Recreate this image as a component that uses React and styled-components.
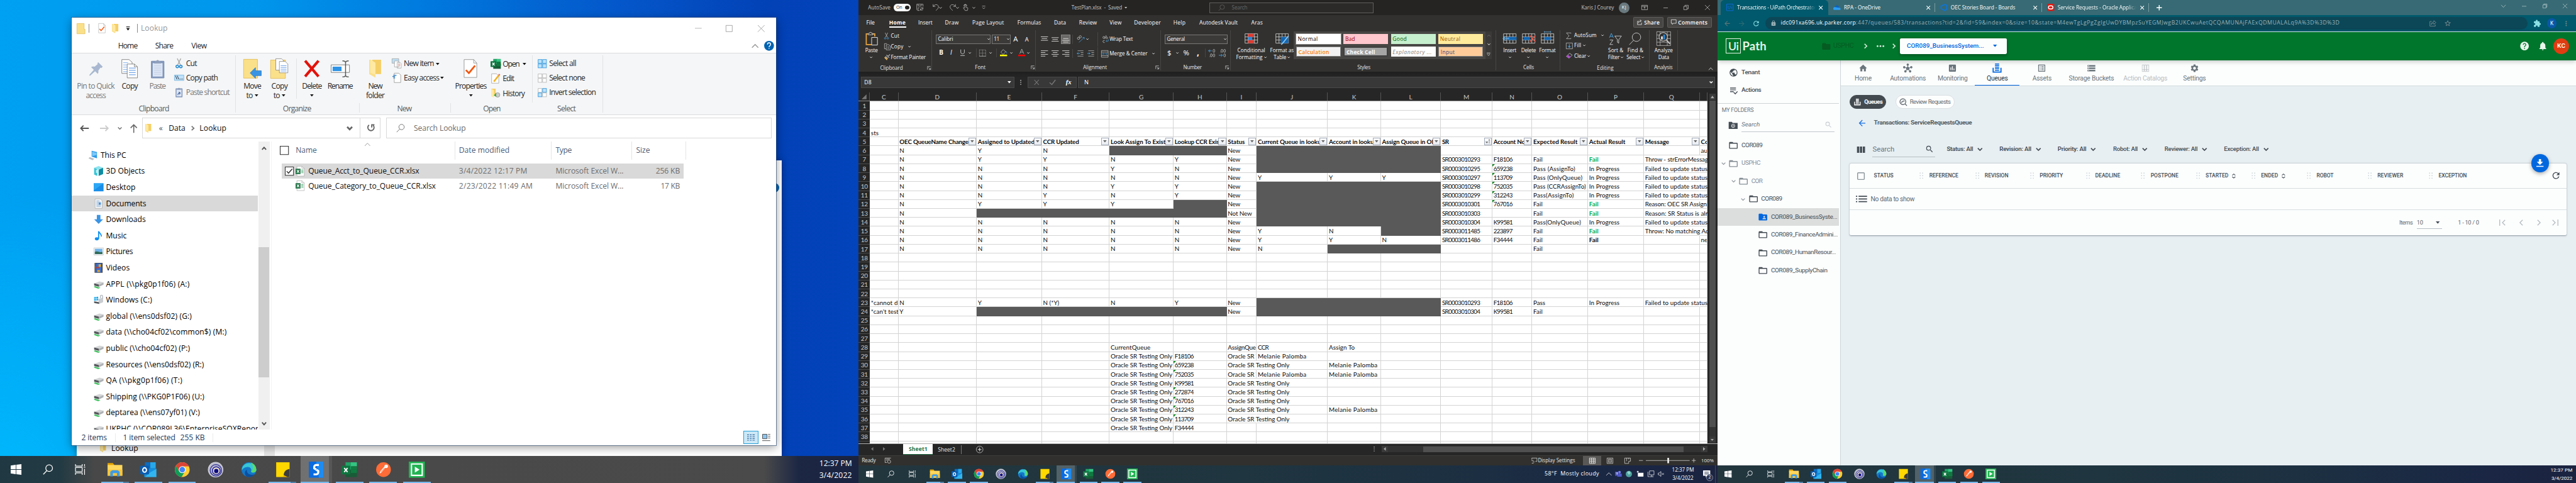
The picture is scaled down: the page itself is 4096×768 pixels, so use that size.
import React, { useLayoutEffect, useRef } from "react";
import styled, { createGlobalStyle, css } from "styled-components";
import {
  MdHome, MdInsertChart, MdSettings, MdPublic, MdFolderOpen, MdFolderShared, MdFolder, MdHelp,
  MdNotifications, MdSearch, MdRefresh, MdStorage, MdListAlt, MdArrowBack, MdArrowForward,
  MdStarBorder, MdExtension, MdLock, MdMoreVert, MdHub,
} from "react-icons/md";

/* 1rem equals ten design pixels on a 5760px wide desktop. */
const r = (n) => `${n / 10}rem`;
const UI = `"Open Sans", "Noto Sans", sans-serif`;
const SHEET = `Lato, "Open Sans", sans-serif`;
const WEB = `Roboto, sans-serif`;

const Global = createGlobalStyle`
  html { font-size: calc(100vw / 576); }
  *, *::before, *::after { box-sizing: border-box; }
  body { margin: 0; overflow: hidden; background: #000; font-family: ${UI}; }
`;

/* ---------- shared pieces ---------- */
const LabelBox = styled.span`
  display: block;
  flex: none;
  white-space: pre;
  line-height: 1.3;
  ${(p) => p.$w && css`width: ${r(p.$w)};`}
  font-size: ${(p) => r(p.$s || 17)};
  color: ${(p) => p.$c || "inherit"};
  font-weight: ${(p) => p.$b || 400};
  font-style: ${(p) => (p.$i ? "italic" : "normal")};
`;

/* Text tracked out or in so that it takes exactly its column width. */
function T({ w, s, c, b, i, children, className }) {
  const ref = useRef(null);
  useLayoutEffect(() => {
    const el = ref.current;
    if (!el || !w) return;
    el.style.letterSpacing = "0px";
    const rem = parseFloat(getComputedStyle(document.documentElement).fontSize);
    const natural = el.getBoundingClientRect().width;
    const n = el.textContent.length;
    el.style.letterSpacing = `${(((w / 10) * rem - natural) / n).toFixed(3)}px`;
  }, [w, s, children]);
  return (
    <LabelBox className={className} $w={w} $s={s} $c={c} $b={b} $i={i}>
      <span ref={ref}>{children}</span>
    </LabelBox>
  );
}

/* A strip whose children start at the given column offsets. */
const Line = styled.div`
  display: grid;
  flex: none;
  align-items: center;
  justify-items: start;
  height: ${(p) => r(p.$h)};
  padding-left: ${(p) => r(p.$x[0])};
  grid-template-columns: ${(p) =>
    p.$x.map((v, i) => (i < p.$x.length - 1 ? r(p.$x[i + 1] - v) : "max-content")).join(" ")};
  grid-template-rows: 100%;
`;

const Ico = styled.svg.attrs((p) => ({
  viewBox: p.viewBox || `0 0 ${p.$w} ${p.$h || p.$w}`,
  fill: p.fill || "none",
  stroke: p.stroke || "currentColor",
}))`
  display: block;
  flex: none;
  overflow: visible;
  width: ${(p) => r(p.$w)};
  height: ${(p) => r(p.$h || p.$w)};
  color: ${(p) => p.$c || "inherit"};
`;

const Rule = styled.i`
  display: block;
  flex: none;
  width: ${(p) => r(p.$w || 1.4)};
  height: ${(p) => r(p.$h)};
  margin: ${(p) => p.$m || 0};
  background: ${(p) => p.$c};
`;

const MdBox = styled.span`
  display: block;
  flex: none;
  width: ${(p) => r(p.$s)};
  height: ${(p) => r(p.$s)};
  color: ${(p) => p.$c || "inherit"};
  svg { display: block; width: 100%; height: 100%; }
`;
const Md = ({ icon: Icon, s = 20, c }) => <MdBox $s={s} $c={c}><Icon /></MdBox>;

const Caret = ({ s = 7, c, k = 1.4 }) => (
  <Ico $w={s} $h={s * 0.6} viewBox="0 0 10 6" $c={c} strokeWidth={k * 1.4}><path d="M1 .8 5 4.8 9 .8" /></Ico>
);
const Tri = ({ s = 9, c = "#111" }) => (
  <Ico $w={s} $h={s * 0.6} viewBox="0 0 10 6" stroke="none" $c={c}><path fill="currentColor" d="M0 0h10L5 6z" /></Ico>
);

const Stage = styled.main`
  display: flex;
  width: 576rem;
  height: 108rem;
  overflow: hidden;
`;
const Screen = styled.section`
  position: relative;
  flex: none;
  display: flex;
  flex-direction: column;
  width: 192rem;
  height: 108rem;
  overflow: hidden;
`;

/* ---------- taskbar ---------- */
const AppGlyph = {
  explorer: (<g stroke="none"><path fill="#e2a203" d="M1 2h8l2 3v4H1z" /><path fill="#ffd75e" d="M1 5h22v16H1z" /><path fill="#f9c53a" d="M1 12h22v9H1z" /><path fill="#3f9be6" d="M5 22v-7l3-2h8l3 2v7h-4v-5H9v5z" /></g>),
  outlook: (<g stroke="none"><path fill="#0f6cbd" d="M7 1h16v9H7z" /><path fill="#28a8ea" d="M15 1h8v9h-8z" /><path fill="#1490df" d="M6 10h18v13H6z" /><path fill="#50d9ff" d="m15 16 9-5v12H7z" opacity=".5" /><rect fill="#0a5cb0" x="0" y="6" width="13" height="13" rx="1" /><ellipse cx="6.500" cy="12.500" rx="2.800" ry="3.300" stroke="#fff" strokeWidth="1.800" fill="none" /></g>),
  chrome: (<g stroke="none"><circle cx="12" cy="12" r="11" fill="#fc3" /><path fill="#db4437" d="M2.500 6.500A11 11 0 0 1 22 7H12L7 14z" /><path fill="#0f9d58" d="M2.500 6.500A11 11 0 0 0 11 23l5-8.500-8.700-.3z" /><circle cx="12" cy="12" r="5.200" fill="#fff" /><circle cx="12" cy="12" r="4.200" fill="#4285f4" /></g>),
  rings: (<g><circle cx="12" cy="12" r="11" fill="#bdbdd0" stroke="#d5d5dc" /><circle cx="12.500" cy="13" r="8.500" stroke="#3b3b96" strokeWidth="1.400" /><circle cx="13" cy="13.500" r="5.800" stroke="#22229a" strokeWidth="1.400" fill="#e5dccb" /><circle cx="13" cy="14" r="3.200" stroke="none" fill="#0c0c84" /></g>),
  edge: (<g stroke="none"><circle cx="12" cy="12" r="11" fill="#1478c8" /><path fill="#37c6d6" d="M1.500 10A11 11 0 0 1 23 12c0 5-6 5.500-8 3 2-4-1-7-5-7-4 0-7 2-8.500 5z" /><path fill="#5bd96a" d="M14 1.200A11 11 0 0 1 23 12c0 4-5 5-7.500 3.300C20 10 18 4 14 1.200z" /><path fill="#0b4f9e" d="M9 12c-1 6 5 9 11.500 7A11 11 0 0 1 9 22.500C5 20 5 14 9 12z" /></g>),
  notes: (<g stroke="none"><path fill="#ffd800" d="M2 1h20v22H2z" /><path fill="#3c3c3c" d="M22 11v12h-9c0-7 2-11 9-12z" /><path fill="#f0b400" d="M13 20v3h6z" /></g>),
  snag: (<g stroke="none"><path fill="#0a6be0" d="M1 0h22v24H1z" /><path fill="#1d8cf2" d="M12 0h11v24h-7z" /><path d="M16 5h-4a3 3 0 0 0-3 3v2l6 4v2a3 3 0 0 1-3 3H8" stroke="#fff" strokeWidth="3" fill="none" /><path d="M12 11.500v1" stroke="#0a6be0" strokeWidth="1" /></g>),
  excel: (<g stroke="none"><path fill="#21a366" d="M6 1h9v11H6z" /><path fill="#33c481" d="M14 1h9v6h-9z" /><path fill="#107c41" d="M14 7h9v6h-9z" /><path fill="#185c37" d="M6 12h17v11H6z" /><path fill="#107c41" d="M14 12h9v5h-9z" /><rect fill="#0f7540" x="0" y="6" width="13" height="13" rx="1" /><path d="m4 9.500 5 6M9 9.500l-5 6" stroke="#fff" strokeWidth="1.800" /></g>),
  postman: (<g stroke="none"><circle cx="12" cy="12" r="11" fill="#ff6c37" /><path d="m6 18 2.500-1.500L15 9l-1.800-1.600L7.500 14z" fill="#fff" /><circle cx="16" cy="7" r="2.600" fill="#fff" /><path d="m8 15.500 5.500-6" stroke="#ff6c37" strokeWidth=".8" /></g>),
  play: (<g stroke="none"><path fill="#21b352" d="M0 0h24v24H0z" /><path stroke="#fff" strokeWidth="2" fill="none" d="M4 3.500h16v17H4z" /><path fill="#fff" d="m9 7.500 7 4.500-7 4.500z" /></g>),
};
const APPS = [
  ["explorer", 2], ["outlook", 1], ["chrome", 1], ["rings", 0], ["edge", 0],
  ["notes", 2], ["snag", 3], ["excel", 1], ["postman", 1], ["play", 1],
];

const Bar = styled.footer`
  position: relative;
  flex: none;
  display: flex;
  height: ${(p) => r(p.$h)};
  margin-top: auto;
  background: ${(p) => p.$bg};
  color: #fff;
`;
const SysSlot = styled.div`
  display: flex;
  align-items: center;
  justify-content: center;
  width: ${(p) => r(p.$w)};
`;
const AppSlot = styled.div`
  position: relative;
  display: flex;
  align-items: center;
  justify-content: center;
  width: ${(p) => r(p.$w)};
  &::before {
    content: "";
    position: absolute;
    inset: 0 ${(p) => r(p.$w * 0.03)};
    background: ${(p) => (p.$state === 3 ? "linear-gradient(90deg, rgba(255,255,255,.22) 90%, rgba(255,255,255,.08) 90%)" : "none")};
  }
  &::after {
    content: "";
    position: absolute;
    bottom: 0;
    left: ${(p) => (p.$state === 3 ? "3%" : "9%")};
    right: ${(p) => (p.$state === 3 ? "12%" : "9%")};
    height: ${(p) => r(p.$w * 0.045)};
    background: ${(p) => (p.$state === 0 ? "none" : p.$state === 2 ? "linear-gradient(90deg,#76b9ed 80%,#4f7ea3 80%)" : "#76b9ed")};
  }
  svg { position: relative; z-index: 1; }
`;
const AppGap = styled.div`width: ${(p) => r(p.$w)};`;
const Clock = styled.div`
  display: flex;
  flex-direction: column;
  align-items: ${(p) => p.$align || "flex-end"};
  justify-content: center;
  gap: ${(p) => r(p.$gap)};
  margin-left: ${(p) => (p.$ml !== undefined ? r(p.$ml) : "auto")};
  margin-right: ${(p) => r(p.$mr)};
`;

function TaskApps({ big }) {
  const k = big ? 1.5 : 1;
  const sys = 48 * k;
  return (
    <>
      <SysSlot $w={sys}>
        <Ico $w={16 * k} viewBox="0 0 16 16" stroke="none" fill="#fff"><path d="M0 2.200 7.500 1v6.600H0zM8.300.9 16 0v7.600H8.300zM0 8.400h7.500V15L0 13.800zM8.300 8.400H16V16l-7.700-1z" /></Ico>
      </SysSlot>
      <SysSlot $w={sys}>
        <Ico $w={16 * k} viewBox="0 0 16 16" strokeWidth="1.200"><circle cx="9.500" cy="6" r="5" /><path d="M6 9.800.8 15.200" /></Ico>
      </SysSlot>
      <SysSlot $w={sys}>
        <Ico $w={16 * k} viewBox="0 0 16 16" strokeWidth="1.100"><path d="M1 0v3h10V0M1 16v-3h10v3M1 5h10v6H1zM14.500 0v3M14.500 7v9M13.500 4.500h2" /></Ico>
      </SysSlot>
      <AppGap $w={big ? 3.5 : 2.5} />
      {APPS.map(([name, state]) => (
        <AppSlot key={name} $w={big ? 75 : 49} $state={state}>
          <Ico $w={24 * k} viewBox="0 0 24 24">{AppGlyph[name]}</Ico>
        </AppSlot>
      ))}
    </>
  );
}

/* ---------- file explorer ---------- */
const Desktop = styled(Screen)`
  background:
    radial-gradient(ellipse 30% 60% at 0% 100%, rgba(0, 190, 255, .8), transparent),
    linear-gradient(90deg, #00a0f2 0%, #0096ec 30%, #0079de 50%, #0457ca 72%, #0241b6 90%, #0343bb 100%);
`;
const RearWindow = styled.div`
  position: absolute;
  left: 17.2rem;
  top: 35.9rem;
  width: 157.6rem;
  height: 68rem;
  background: #fff;
  box-shadow: 0 0 1.4rem rgba(0, 0, 0, .35);
  display: flex;
  flex-direction: column;
  justify-content: flex-end;
  overflow: hidden;
`;
const RearRow = styled(Line)`margin-bottom: 2.400rem;`;
const RearHelp = styled.i`
  width: 2.2rem; height: 2.2rem; border-radius: 50%;
  background: #0063b1; margin: 5rem 0.6rem auto auto;
`;
const Window = styled.div`
  position: absolute;
  left: 16rem;
  top: 4rem;
  width: 157.6rem;
  height: 95.6rem;
  display: flex;
  flex-direction: column;
  background: #fff;
  color: #262626;
  outline: 1px solid rgba(40, 70, 110, .6);
  box-shadow: 0 .6rem 2rem rgba(0, 0, 0, .4);
`;
const Ribbon = styled.div`
  flex: none;
  display: flex;
  height: 13.9rem;
  background: #f5f6f7;
  border-top: 1px solid #dadbdc;
  border-bottom: 1px solid #dadbdc;
`;
const Group = styled.div`
  position: relative;
  flex: none;
  display: flex;
  flex-direction: column;
  width: ${(p) => r(p.$w)};
  &::after {
    content: "";
    position: absolute;
    right: 0;
    top: ${(p) => r(p.$top ?? 4)};
    bottom: ${(p) => r(p.$bot ?? 4)};
    width: 1px;
    background: #e2e3e4;
  }
`;
const GroupBody = styled.div`display: flex; height: 11.2rem; padding-top: .6rem;`;
const GroupName = styled.div`
  display: flex; justify-content: center; color: #5a5a5a; margin-right: ${(p) => r(p.$mr || 0)};
`;
const BigButton = styled.div`
  display: flex;
  flex-direction: column;
  align-items: center;
  width: ${(p) => r(p.$w)};
  margin-left: ${(p) => r(p.$ml || 0)};
  color: ${(p) => (p.$off ? "#777" : "#262626")};
`;
const BigArt = styled.div`display: flex; align-items: center; justify-content: center; height: 5.7rem;`;
const BigText = styled.div`display: flex; align-items: center; gap: .5rem; height: 2.1rem;`;
const Stack = styled.div`display: flex; flex-direction: column; padding-top: .1rem;`;

const Folder = ({ w, h }) => (
  <Ico $w={w} $h={h} viewBox="0 0 20 30" preserveAspectRatio="none" stroke="none">
    <path fill="#f5cf66" d="M5 0h14v24H5z" /><path fill="#fbe08a" d="M0 0h2l8 5v25L0 24z" /><path fill="#ffe9a4" d="m2 0 8 5v20L2 22z" />
  </Ico>
);
const FlatFolder = ({ w, h }) => (
  <Ico $w={w} $h={h} viewBox="0 0 20 24" preserveAspectRatio="none" stroke="#dcae3a" strokeWidth=".8">
    <path fill="#fbe08a" d="M.5.5h17v13h2v10H.5z" />
  </Ico>
);
const Pages = ({ w = 37, h = 43 }) => (
  <Ico $w={w} $h={h} viewBox="0 0 37 43" stroke="#777" strokeWidth="1.200">
    <path fill="#fff" d="M1 1h16l7 6v25H1z" /><path stroke="#6aa3e8" d="M4 8h11M4 13h16M4 18h16M4 23h16M4 28h16" />
    <path fill="#fff" d="M13 11h16l7 6v25H13z" /><path d="M29 11v6h7" /><path stroke="#3a7fdc" d="M17 20h15M17 25h15M17 30h15M17 35h15" />
  </Ico>
);
const DocCheck = ({ w, h }) => (
  <Ico $w={w} $h={h} viewBox="0 0 31 43" stroke="#8a8a8a" strokeWidth="1.200">
    <path fill="#fff" d="M1 1h22l7 8v33H1z" /><path d="M23 1v8h7" /><path stroke="#f2560d" strokeWidth="4" d="m5 25 7 7 14-17" />
  </Ico>
);
const Clip = ({ w, h, link }) => (
  <Ico $w={w} $h={h} viewBox="0 0 30 43" stroke="none">
    <rect y="4" width="30" height="39" rx="2" fill="#8296bb" /><path fill="#dde6f5" d="M4 9h22v30H4z" />
    <path fill="#8fa0bd" d="M9 5 13 3a2.500 2.500 0 0 1 4 0l4 2 2 5H7z" />
    {link ? <path d="M10 34c0-8 3-10 9-10m-5-4 6 4-3 7" stroke="#3b5e9a" strokeWidth="3" fill="none" /> : <path stroke="#bac8e0" d="M7 14h16M7 18h16M7 22h16M7 26h16M7 30h16M7 34h16" />}
  </Ico>
);
const XlsDoc = ({ w = 20, h = 23 }) => (
  <Ico $w={w} $h={h} viewBox="0 0 20 23" stroke="none">
    <path fill="#fff" stroke="#999" strokeWidth=".8" d="M3 .5h11l5.500 5v17H3z" /><path stroke="#999" strokeWidth=".8" d="M14 .5v5h5.500" />
    <path fill="#217346" d="M0 6h11v12H0z" /><path stroke="#fff" strokeWidth="1.700" d="m3 9 5 6M8 9l-5 6" /><path stroke="#35a263" strokeWidth="1.300" d="M12.500 9h5M12.500 12h5M12.500 15h5" />
  </Ico>
);

const NavIcon = {
  pc: <g stroke="none"><path fill="#2d9be8" d="m8 1 12 3v14l-12-4z" /><path fill="#7cc8f7" d="m9 3 10 2.500v5L9 13z" /><path fill="#b9bec4" d="m4 15 10 4-4 3-9-4z" /></g>,
  cube: <g stroke="none"><path fill="#8fe3ee" d="M11 0l10 4-10 4L1 4z" /><path fill="#35c3d6" d="M1 4l7 3v15l-7-3z" /><path fill="#0e8ca2" d="M21 4l-10 4v14l10-4z" /><path fill="#b9f2f7" d="M5 8l6 2v7l-6-2z" /></g>,
  desk: <g stroke="none"><path fill="#1a8ee8" d="M0 2h22v18H0z" /><path fill="#2da7f5" d="M0 2h22L0 18z" /></g>,
  docs: <g stroke="none"><path fill="#f4f5f6" stroke="#aaa" d="M3 .5h12l4 4v17H3z" /><path stroke="#5c8fc7" d="M6 5h7M6 8h10M6 11h4M6 14h10M6 17h10" /><path fill="#3f8ad3" d="M11 9h5v4h-5z" /></g>,
  down: <path stroke="none" fill="#3a94e4" d="M7 1h8v10h6L11 21 1 11h6z" />,
  music: <g stroke="none"><ellipse cx="7" cy="18" rx="4.500" ry="3.500" fill="#0f8fee" /><path stroke="#0f8fee" strokeWidth="2.500" d="M11 18V1c1 5 7 5 6 12" /></g>,
  pics: <g stroke="none"><path fill="#fff" stroke="#b8b8b8" d="M.5 3h21v16H.5z" /><path fill="#72b4ea" d="M2.500 5h17v12h-17z" /><path fill="#2f6b58" d="M2.500 12c6-3 9 2 17 0v5h-17z" /></g>,
  video: <g stroke="none"><path fill="#333" d="M2 0h18v22H2z" /><path fill="#3b6fd0" d="M5 1h12v20H5z" /><path fill="#f0a818" d="M11 3h5v6h-5zM8 16h6v4H8z" /><path fill="#c8402f" d="M5 9h7v3H5z" /><path stroke="#ddd" strokeDasharray="1.500 1.500" d="M3.500 1v21M18.500 1v21" /></g>,
  net: <g stroke="none"><path fill="#d3d5d7" d="M1 9l12-4 9 2-10 5z" /><path fill="#55585b" d="M1 9l11 3v5L1 14z" /><path fill="#aeb2b5" d="M22 7v5l-10 5v-5z" /><path fill="#3fc15e" d="M2 15l9 3 4 1-5 2-9-3z" /></g>,
  disk: <g stroke="none"><path fill="#18a7ea" d="M1 5l9-1v8l-9 1z" /><path stroke="#fff" d="M5.500 4v9M1 8.700l9-.5" /><path fill="#c9ccd0" d="M10 9l11-3v10l-9 4z" /><path fill="#54585c" d="M1 14l11 2v4L1 18z" /><path stroke="#b7bcc2" strokeWidth="2" d="M15 7V3a2.500 2.500 0 0 1 5 0v5" /></g>,
};
const NAV = [
  ["cube", "3D Objects", 87], ["desk", "Desktop", 66], ["docs", "Documents", 90], ["down", "Downloads", 89],
  ["music", "Music", 46], ["pics", "Pictures", 60], ["video", "Videos", 53],
  ["net", String.raw`APPL (\\pkg0p1f06) (A:)`, 187], ["disk", "Windows (C:)", 103],
  ["net", String.raw`global (\\ens0dsf02) (G:)`, 192], ["net", String.raw`data (\\cho04cf02\common$) (M:)`, 270],
  ["net", String.raw`public (\\cho04cf02) (P:)`, 188], ["net", String.raw`Resources (\\ens0dsf02) (R:)`, 219],
  ["net", String.raw`QA (\\pkg0p1f06) (T:)`, 171], ["net", String.raw`Shipping (\\PKG0P1F06) (U:)`, 220],
  ["net", String.raw`deptarea (\\ens07yf01) (V:)`, 210], ["net", String.raw`UKPHC (\\COR089L36\EnterpriseSOXRepor`, 341],
];

const Box = styled(Line)`
  border: 1px solid #d9d9d9;
  width: ${(p) => r(p.$w)};
`;
const Panes = styled.div`flex: none; display: flex; height: 64.5rem; overflow: hidden; color: #000;`;
const NavPane = styled.div`width: 41.7rem; padding-top: 1.3rem; overflow: hidden;`;
const NavRow = styled(Line)`background: ${(p) => (p.$on ? "#d9d9d9" : "none")};`;
const ScrollBar = styled.div`
  display: flex; flex-direction: column; align-items: center;
  width: 2.5rem; margin-left: .1rem; padding: 1.1rem 0 .9rem; background: #f0f0f0; color: #505050;
`;
const Thumb = styled.i`width: 2.4rem; height: 29.1rem; margin: 21.8rem 0 auto; background: #cdcdcd;`;
const Files = styled.div`flex: 1; margin-left: .3rem; border-left: 1px solid #f3f3f3;`;
const FileHead = styled(Line)`color: #4c607a; margin-bottom: .9rem;`;
const FileRow = styled(Line)`
  margin-left: 2.3rem; width: 89.8rem; color: #6d6d6d;
  background: ${(p) => (p.$on ? "#d9d9d9" : "none")};
`;
const Check = ({ on }) => (
  <Ico $w={20} stroke="#333" strokeWidth="1.500"><path fill="#fff" d="M.7.7h18.600v18.600H.7z" />{on && <path strokeWidth="2" d="m4 10 4 4.500L16.500 5" />}</Ico>
);
const RightAlign = styled.div`display: flex; justify-content: flex-end; width: 11rem;`;
const ViewPick = styled.div`
  display: flex; align-items: center; justify-content: center; width: 3.4rem; height: 3rem;
  background: #cce8f6; border: 1px solid #26a0da;
`;

const Small = ({ x, h, icon, text, w, arrow, off }) => (
  <Line $h={h || 32} $x={x}>
    {icon}
    <T w={w} c={off ? "#777" : "#262626"}>{text}</T>
    {arrow ? <Tri s={8} /> : <span />}
  </Line>
);
const Big = ({ w, ml, off, art, a, aw, b, bw, arrow }) => (
  <BigButton $w={w} $ml={ml} $off={off}>
    <BigArt>{art}</BigArt>
    <BigText><T w={aw}>{a}</T></BigText>
    <BigText>{b && <T w={bw}>{b}</T>}{arrow && <Tri s={8} />}</BigText>
  </BigButton>
);

function Explorer() {
  return (
    <Desktop>
      <RearWindow>
        <RearHelp />
        <RearRow $h={26} $x={[52, 77, 418]}>
          <Folder w={14} h={20} /><T w={60} c="#000">Lookup</T><Rule $c="#e8e8e8" $w={25} $h={60} />
        </RearRow>
      </RearWindow>
      <Window>
        <Line $h={47} $x={[11, 39, 59, 91, 121, 147, 155, 1394, 1463, 1534]}>
          <FlatFolder w={19} h={24} /><Rule $c="#888" $h={20} /><DocCheck w={17} h={22} /><Folder w={15} h={21} />
          <Ico $w={10} stroke="#111" strokeWidth="1.500"><path d="M1 1h8" /><path fill="#111" stroke="none" d="M1 4h8L5 9z" /></Ico>
          <Rule $c="#888" $h={20} /><T w={60} c="#999">Lookup</T>
          <Ico $w={15} $c="#999"><path d="M0 7h15" /></Ico>
          <Ico $w={15} $c="#888"><path d="M.5.5h14v14H.5z" /></Ico>
          <Ico $w={15} $c="#888"><path d="m0 0 15 15M15 0 0 15" /></Ico>
        </Line>
        <Line $h={31} $x={[104, 187, 268, 1520, 1549]}>
          <T w={43}>Home</T><T w={40}>Share</T><T w={34}>View</T>
          <Ico $w={16} $h={9} $c="#999" strokeWidth="2"><path d="m1 8 7-7 7 7" /></Ico>
          <Ico $w={22} stroke="none"><circle cx="11" cy="11" r="11" fill="#0063b1" /><path stroke="#fff" strokeWidth="2" d="M7.500 8c0-5 7-5 7 0 0 3-3.500 3-3.500 6M11 16v2" /></Ico>
        </Line>
        <Ribbon>
          <Group $w={368}>
            <GroupBody>
              <Big w={108} off a="Pin to Quick" aw={84} b="access" bw={44} art={
                <Ico $w={30} stroke="none" viewBox="0 0 30 30"><path fill="#a9b8d0" d="M20 0 30 10l-3 3-2-1-5 7c1 3 0 5-1 7l-6-6L2 30l-2 0 1-3L10 17 4 11c2-2 5-2 8-1l7-6-1-2z" /></Ico>} />
              <Big w={44} a="Copy" aw={36} art={<Pages />} />
              <Big w={74} ml={3} off a="Paste" aw={36} art={<Clip w={30} h={43} />} />
              <Stack>
                <Small x={[3, 27, 80]} text="Cut" w={24} icon={<Ico $w={16} $h={22}><path stroke="#a7a7a7" strokeWidth="2" d="m4 0 7 14M12 0 5 14" /><g stroke="#1d87cf" strokeWidth="2.200"><circle cx="4" cy="18" r="2.800" /><circle cx="12" cy="18" r="2.800" /></g></Ico>} />
                <Small x={[0, 27, 100]} text="Copy path" w={71} icon={<Ico $w={22} $h={13}><path fill="#bfe2fa" stroke="#5fa8d8" d="M.5.500h21v12H.5z" /><path stroke="#223" strokeWidth="1.300" d="m3 2 3 8M7 2l3 8M12 9.500h1.500M15 9.500h1.500M18 9.500h1.500" /></Ico>} />
                <Small x={[3, 27, 130]} off text="Paste shortcut" w={97} icon={<Clip w={16} h={22} link />} />
              </Stack>
            </GroupBody>
            <GroupName><T w={68} c="#5a5a5a">Clipboard</T></GroupName>
          </Group>
          <Group $w={276} $top={111}>
            <GroupBody>
              <Big w={72} a="Move" aw={39} b="to" bw={14} arrow art={
                <Ico $w={40} $h={43} viewBox="0 0 40 43" stroke="none"><path fill="#fbe08a" stroke="#dcae3a" d="M.5.5h31v42H.5z" /><path fill="#3a94e4" stroke="#2373b8" d="M15 31 27 19v7h13v11H27v6z" /></Ico>} />
              <Big w={50} a="Copy" aw={36} b="to" bw={14} arrow art={
                <Ico $w={40} $h={45} viewBox="0 0 40 45" stroke="#777"><path fill="#fbe08a" stroke="#dcae3a" d="M.5 3.500h33v41H.5z" /><path fill="#fff" d="M12 .5h13l4 4V26H12z" /><path fill="#fff" d="M20 6.500h13l6 6V32H20z" /><path stroke="#3a7fdc" d="M23 16h13M23 20h13M23 24h13M23 28h13" /></Ico>} />
              <Rule $c="#e2e3e4" $h={91} $m="0.500rem 0 0 1.200rem" />
              <Big w={68} a="Delete" aw={44} arrow art={<Ico $w={36} $h={37} viewBox="0 0 36 37" stroke="#e3120b" strokeWidth="6"><path d="m3 1 30 35M33 1 3 36" /></Ico>} />
              <Big w={58} a="Rename" aw={56} art={
                <Ico $w={42} $h={38} viewBox="0 0 42 38" stroke="#777" strokeWidth="1.300"><path fill="#fff" d="M.7 10h41v17h-41z" /><path fill="#2f94e6" stroke="none" d="M4 14h20v10H4z" /><path stroke="#555" strokeWidth="2" d="M26 1c5 0 7 1 7 4v28c0 3-2 4-7 4M40 1c-5 0-7 1-7 4M40 37c-5 0-7-1-7-4" /></Ico>} />
            </GroupBody>
            <GroupName $mr={4}><T w={63} c="#5a5a5a">Organize</T></GroupName>
          </Group>
          <Group $w={204} $top={111}>
            <GroupBody>
              <Big w={70} a="New" aw={31} b="folder" bw={41} art={<Folder w={28} h={40} />} />
              <Stack>
                <Small x={[2, 29, 100]} arrow text="New item" w={67} icon={<Ico $w={22} viewBox="0 0 22 22" stroke="#999"><path fill="#bfe0f5" d="M.5.5h15v10H.5z" /><path fill="#fff" d="M6 5.500h7l3 3V19H6zM12 8.500h6l3 3V21.500h-9z" /><path stroke="#d88" d="M14 13h5M14 16h5" /></Ico>} />
                <Small x={[3, 29, 111]} arrow text="Easy access" w={79} icon={<Ico $w={19} $h={22} viewBox="0 0 19 22" stroke="#888"><path fill="#fff" d="M4 .5h10l4.500 4v17H4z" /><path stroke="#2277c5" strokeWidth="1.600" d="M2 5h7M0 8h6M2 11h4" /></Ico>} />
              </Stack>
            </GroupBody>
            <GroupName $mr={4}><T w={32} c="#5a5a5a">New</T></GroupName>
          </Group>
          <Group $w={183} $bot={27}>
            <GroupBody>
              <Big w={89} a="Properties" aw={70} arrow art={<DocCheck w={31} h={42} />} />
              <Stack>
                <Small x={[0, 27, 71]} h={33} arrow text="Open" w={37} icon={<Ico $w={24} viewBox="0 0 24 24">{AppGlyph.excel}</Ico>} />
                <Small x={[2, 27, 90]} h={33} text="Edit" w={25} icon={<Ico $w={20} $h={22} stroke="#999"><path fill="#fff" d="M1 .5h11l5 5v16H1z" /><path stroke="#f2b11d" strokeWidth="3.500" d="M6 18 17 4" /><path stroke="#e06a6a" strokeWidth="3.500" d="m17 4 2-2.500" /></Ico>} />
                <Small x={[2, 27, 90]} h={33} text="History" w={49} icon={<Ico $w={20} $h={20} viewBox="0 0 20 20" stroke="none"><path fill="#f5cf66" d="M0 0h10v16H0z" /><path fill="#ffe9a4" d="m0 0 6 3v17l-6-3z" /><circle cx="14.500" cy="14" r="5" fill="#ccc" stroke="#888" /><path fill="#35a845" d="m6 15 5-6v4c0 4 0 5 2 6z" /></Ico>} />
              </Stack>
            </GroupBody>
            <GroupName><T w={38} c="#5a5a5a">Open</T></GroupName>
          </Group>
          <Group $w={157}>
            <GroupBody>
              <Stack>
                {[["Select all", 60, [1, 1, 1, 1]], ["Select none", 80, [0, 0, 0, 0]], ["Invert selection", 104, [0, 1, 1, 0]]].map(([t, w, m]) => (
                  <Small key={t} x={[11, 37, 150]} text={t} w={w} icon={
                    <Ico $w={20} viewBox="0 0 20 20">
                      {m.map((v, i) => <rect key={i} x={1 + (i % 2) * 10} y={1 + (i >> 1) * 10} width="8.500" height="8.500" fill={v ? "#bfe2fa" : "#fff"} stroke={v ? "#2d96dd" : "#b5b5b5"} strokeWidth="1.200" />)}
                    </Ico>} />
                ))}
              </Stack>
            </GroupBody>
            <GroupName $mr={6}><T w={41} c="#5a5a5a">Select</T></GroupName>
          </Group>
        </Ribbon>
        <Line $h={59} $x={[18, 64, 103, 131, 158, 703]}>
          <Ico $w={20} $h={14} $c="#555" strokeWidth="2.600"><path d="M20 7H2M8 1 2 7l6 6" /></Ico>
          <Ico $w={20} $h={14} $c="#ccc" strokeWidth="2.600"><path d="M0 7h18m-6-6 6 6-6 6" /></Ico>
          <Caret s={10} c="#666" k={1.3} />
          <Ico $w={16} $h={20} $c="#666" strokeWidth="2.200"><path d="M8 20V2M1 9l7-7 7 7" /></Ico>
          <Box $w={533} $h={46} $x={[6, 36, 58, 108, 127, 456, 485, 502]}>
            <Folder w={14} h={20} /><T w={9} c="#555">«</T><T w={37} c="#111">Data</T>
            <Ico $w={8} $h={11} $c="#777" strokeWidth="2.500"><path d="m1 1 5 4.500L1 10" /></Ico>
            <T w={60} c="#111">Lookup</T><Caret s={14} c="#666" k={1.9} /><Rule $c="#d9d9d9" $w={1.4} $h={44} />
            <Ico $w={17} $h={18} viewBox="0 0 17 18" $c="#666" strokeWidth="2.600"><path d="M4 2.500A7 7 0 1 0 13 3M10 8V2h6" /></Ico>
          </Box>
          <Box $w={862} $h={46} $x={[22, 61]}>
            <Ico $w={19} $c="#777" strokeWidth="1.400"><circle cx="12" cy="7" r="6" /><path d="M8 11.500 1 18.500" /></Ico>
            <T w={116} c="#6d6d6d">Search Lookup</T>
          </Box>
        </Line>
        <Panes>
          <NavPane>
            <NavRow $h={36} $x={[37, 65]}><Ico $w={22} viewBox="0 0 22 22">{NavIcon.pc}</Ico><T w={57}>This PC</T></NavRow>
            {NAV.map(([k, t, w]) => (
              <NavRow key={t} $h={36} $x={[49, 77]} $on={k === "docs"}>
                <Ico $w={22} viewBox="0 0 22 22">{NavIcon[k]}</Ico><T w={w}>{t}</T>
              </NavRow>
            ))}
          </NavPane>
          <ScrollBar>
            <Ico $w={11} $h={8} strokeWidth="2.600"><path d="m1 7 4.500-5L10 7" /></Ico>
            <Thumb />
            <Ico $w={11} $h={8} strokeWidth="2.600"><path d="m1 1 4.500 5L10 1" /></Ico>
          </ScrollBar>
          <Files>
            <FileHead $h={41} $x={[19, 54, 208, 409, 419, 625, 635, 805, 815, 926]}>
              <Check /><T w={47}>Name</T>
              <Ico $w={12} $h={34} $c="#777"><path d="m0 7 6-6 6 6" /></Ico>
              <Rule $c="#e5e5e5" $h={41} /><T w={113}>Date modified</T><Rule $c="#e5e5e5" $h={41} /><T w={36}>Type</T>
              <Rule $c="#e5e5e5" $h={41} /><T w={31}>Size</T><Rule $c="#e5e5e5" $h={41} />
            </FileHead>
            {[["Queue_Acct_to_Queue_CCR.xlsx", 248, "3/4/2022 12:17 PM", 153, "256 KB", 54, true], ["Queue_Category_to_Queue_CCR.xlsx", 285, "2/23/2022 11:49 AM", 165, "17 KB", 43, false]].map(([n, nw, d, dw, s, sw, on]) => (
              <FileRow key={n} $h={33} $on={on} $x={[6, 30, 59, 396, 612, 780]}>
                {on ? <Check on /> : <span />}<XlsDoc /><T w={nw} c="#111">{n}</T><T w={dw}>{d}</T><T w={152}>Microsoft Excel W...</T>
                <RightAlign><T w={sw}>{s}</T></RightAlign>
              </FileRow>
            ))}
          </Files>
        </Panes>
        <Line $h={35} $x={[22, 97, 115, 243, 315, 1502, 1545]}>
          <T w={57} c="#1e395b">2 items</T><Rule $c="#ececec" $h={20} /><T w={117} c="#1e395b">1 item selected</T><T w={55} c="#1e395b">255 KB</T><Rule $c="#ececec" $h={20} />
          <ViewPick><Ico $w={17} $h={16} stroke="#3a6ea5" strokeWidth="1.600"><path d="M0 2h4M6 2h4M12 2h5M0 6h4M6 6h4M12 6h5M0 10h4M6 10h4M12 10h5M0 14h4M6 14h4M12 14h5" /></Ico></ViewPick>
          <Ico $w={18} $h={16} stroke="#555" strokeWidth="1.400"><path fill="#8bc4ee" d="M.7.7h10v10H.7zM0 15h18M13 1h5M13 5h5M13 9h5" /></Ico>
        </Line>
      </Window>
      <Bar $h={60} $bg="linear-gradient(90deg,#203842 0%,#223a43 7%,#484848 11%,#4a4a4a 89%,#1c2744 93%,#1a2340 100%)">
        <TaskApps big />
        <Clock $gap={5} $mr={15}><T w={73} s={17}>12:37 PM</T><T w={73} s={17}>3/4/2022</T></Clock>
      </Bar>
    </Desktop>
  );
}

/* ---------- spreadsheet ---------- */
const ExcelScreen = styled(Screen)`background: #262626; color: #fff;`;
const TitleLine = styled(Line)`background: #252423; color: #c8c6c4;`;
const TabLine = styled(Line)`background: #323130; color: #fff;`;
const Toggle = styled.div`
  display: flex; align-items: center; justify-content: space-between;
  width: 3.8rem; height: 1.6rem; padding: 0 .3rem 0 .6rem; border-radius: .8rem; background: #fff; color: #252423;
`;
const Knob = styled.i`width: .9rem; height: .9rem; border-radius: 50%; background: #252423;`;
const SearchField = styled(Line)`width: 36.8rem; border: 1px solid #605e5c; background: #2b2a29; color: #6a6866;`;
const Avatar = styled.div`
  display: flex; align-items: center; justify-content: center; flex: none;
  width: ${(p) => r(p.$s)}; height: ${(p) => r(p.$s)}; border-radius: 50%; background: ${(p) => p.$bg}; color: #fff;
  font-family: ${(p) => p.$f || UI};
`;
const ActiveTab = styled.div`
  display: flex; flex-direction: column; gap: .1rem; padding-top: .5rem;
  &::after { content: ""; height: .25rem; background: #fff; width: 3.8rem; }
`;
const ChipButton = styled(Line)`
  width: ${(p) => r(p.$w)}; background: #484644; border: 1px solid #605e5c; border-radius: .2rem;
`;
const XRibbon = styled.div`flex: none; display: flex; height: 9.6rem; background: #323130;`;
const XGroup = styled.div`
  position: relative; flex: none; display: flex; flex-direction: column; width: ${(p) => r(p.$w)};
  &::after { content: ""; position: absolute; right: 0; top: .3rem; bottom: .4rem; width: 1px; background: #484644; }
`;
const XBody = styled.div`display: flex; height: 7.7rem;`;
const XName = styled(Line)`color: #e8e6e4;`;
const Rows = styled.div`display: flex; flex-direction: column; height: 7.7rem; padding-top: ${(p) => r(p.$pt || 0)};`;
const Field = styled(Line)`width: ${(p) => r(p.$w)}; background: #3b3a39; border: 1px solid #7a7877;`;
const XBig = styled.div`
  display: flex; flex-direction: column; align-items: center; width: ${(p) => r(p.$w)}; margin-left: ${(p) => r(p.$ml || 0)};
`;
const XArt = styled.div`display: flex; align-items: center; justify-content: center; height: 4rem; padding-top: .4rem;`;
const XText = styled.div`display: flex; align-items: center; gap: .3rem; height: 1.6rem;`;
const Gallery = styled.div`
  display: grid; grid-template-columns: repeat(4, 10rem) 1.4rem; grid-template-rows: 2.2rem 2.2rem;
  gap: .65rem .6rem; padding: .6rem 0 .6rem .5rem; width: 44.2rem; height: 6.2rem; margin: .5rem 0 0 .4rem; background: #484644;
`;
const Swatch = styled.div`
  display: flex; align-items: center; padding-left: .4rem; overflow: hidden;
  background: ${(p) => p.$bg}; outline: ${(p) => p.$o || "none"}; border: ${(p) => p.$bd || "none"};
`;
const GalleryScroll = styled.div`
  grid-column: 5; grid-row: 1 / 3; margin: -.6rem 0; display: flex; flex-direction: column; justify-content: space-around; align-items: center;
  background: #3b3a39; color: #fff;
`;
const Pressed = styled.div`
  display: flex; align-items: center; justify-content: center; width: 2.1rem; height: 2.2rem; background: #6a6866; border: 1px solid #8a8886;
`;
const CollapseCorner = styled.div`display: flex; align-items: flex-end; margin-left: auto; padding: 0 1rem .5rem 0;`;
const FxText = styled.span`font: italic 700 1.5rem "Liberation Serif", serif; color: #fff;`;
const Tray = styled.div`display: flex; align-items: center; margin-left: auto; gap: .8rem; & > *:first-child { margin-right: .8rem; }`;
const Notice = styled.div`position: relative; display: flex; align-items: center; width: 2.7rem;`;
const Badge = styled.div`
  position: absolute; left: .8rem; top: 2.1rem; width: 1.5rem; height: 1.5rem; border-radius: 50%;
  display: flex; align-items: center; justify-content: center; background: #2b3350; border: 1px solid #7d86a0;
`;

const Launcher = () => <Ico $w={9} viewBox="0 0 9 9" stroke="#d0d0d0"><path d="M1 8V1h7M3 3l5 5M8 4v4H4" /></Ico>;
const LINES = {
  top: "M0 2h16M2 6h12M0 10h16", mid: "M0 4h16M2 8h12M0 12h16", bot: "M2 6h12M0 10h16M2 14h12",
  left: "M0 1h16M0 5h10M0 9h16M0 13h10", center: "M0 1h16M3 5h10M0 9h16M3 13h10", right: "M0 1h16M6 5h10M0 9h16M6 13h10",
};
const Lines = ({ k }) => <Ico $w={16} viewBox="0 0 16 16" stroke="#e8e6e4" strokeWidth="1.200"><path d={LINES[k]} /></Ico>;
const GridArt = ({ children, w = 30 }) => (
  <Ico $w={w} $h={24} viewBox="0 0 30 24" stroke="#ddd" strokeWidth="1.100"><path d="M1 1h28v21H1zM1 8h28M1 15h28M8 1v21M15 1v21M22 1v21" />{children}</Ico>
);

const COLS = [["C", 64], ["D", 175], ["E", 146], ["F", 151], ["G", 143], ["H", 119], ["I", 67], ["J", 159], ["K", 119], ["L", 134], ["M", 115], ["N", 89], ["O", 125], ["P", 125], ["Q", 125], ["R", 17]];
const SHADE = { 6: "GHJKL", 7: "JKL", 8: "JKL", 10: "JKL", 11: "JKL", 12: "HJKL", 13: "EFGHJKL", 14: "JKL", 15: "L", 17: "KL", 23: "JKL", 24: "EFGHJKL" };
const ORC = "Oracle SR Testing Only";
const MEL = "Melanie Palomba";
const FTU = "Failed to update status";
const CELLS = {
  4: { C: "sts" },
  5: { D: "OEC QueueName Change", E: "Assigned to Updated", F: "CCR Updated", G: "Look Assign To Exists", H: "Lookup CCR Exists", I: "Status", J: "Current Queue in lookup", K: "Account in lookup", L: "Assign Queue in OEC", M: "SR", N: "Account No", O: "Expected Result", P: "Actual Result", Q: "Message", R: "Co" },
  6: { D: "N", E: "Y", F: "N", I: "New", R: "au" },
  7: { D: "N", E: "Y", F: "Y", G: "N", H: "Y", I: "New", M: "SR0003010293", N: "F18106", O: "Fail", P: "Fail", Q: "Throw - strErrorMessag" },
  8: { D: "N", E: "N", F: "N", G: "Y", H: "N", I: "New", M: "SR0003010295", N: "659238", O: "Pass (AssignTo)", P: "In Progress", Q: FTU },
  9: { D: "N", E: "N", F: "N", G: "N", H: "N", I: "New", J: "Y", K: "Y", L: "Y", M: "SR0003010297", N: "113709", O: "Pass (OnlyQueue)", P: "In Progress", Q: FTU },
  10: { D: "N", E: "N", F: "N", G: "Y", H: "Y", I: "New", M: "SR0003010298", N: "752035", O: "Pass (CCRAssignTo)", P: "In Progress", Q: FTU },
  11: { D: "N", E: "N", F: "Y", G: "N", H: "Y", I: "New", M: "SR0003010299", N: "312243", O: "Pass(AssignTo)", P: "In Progress", Q: FTU },
  12: { D: "N", E: "Y", F: "Y", G: "Y", I: "New", M: "SR0003010301", N: "767016", O: "Fail", P: "Fail", Q: "Reason: OEC SR Assign" },
  13: { D: "N", I: "Not New", M: "SR0003010303", O: "Fail", P: "Fail", Q: "Reason: SR Status is alr" },
  14: { D: "N", E: "N", F: "N", G: "N", H: "N", I: "New", M: "SR0003010304", N: "K99581", O: "Pass(OnlyQueue)", P: "In Progress", Q: FTU },
  15: { D: "N", E: "N", F: "N", G: "N", H: "N", I: "New", J: "Y", K: "N", M: "SR0003011485", N: "223897", O: "Fail", P: "Fail", Q: "Throw: No matching Ac" },
  16: { D: "N", E: "N", F: "N", G: "N", H: "N", I: "New", J: "Y", K: "Y", L: "N", M: "SR0003011486", N: "F34444", O: "Fail", P: "Fail", R: "ne" },
  17: { D: "N", E: "N", F: "N", G: "N", H: "N", I: "New", J: "N", O: "Fail" },
  23: { C: "*cannot d", D: "N", E: "Y", F: "N (*Y)", G: "N", H: "Y", I: "New", M: "SR0003010293", N: "F18106", O: "Pass", P: "In Progress", Q: FTU },
  24: { C: "*can't test", D: "Y", I: "New", M: "SR0003010304", N: "K99581", O: "Fail" },
  28: { G: "CurrentQueue", I: "AssignQueue", J: "CCR", K: "Assign To" },
  29: { G: ORC, H: "F18106", I: ORC, J: MEL },
  30: { G: ORC, H: "659238", I: ORC, K: MEL },
  31: { G: ORC, H: "752035", I: ORC, J: MEL, K: MEL },
  32: { G: ORC, H: "K99581", I: ORC },
  33: { G: ORC, H: "272874", I: ORC },
  34: { G: ORC, H: "767016", I: ORC },
  35: { G: ORC, H: "312243", I: ORC, K: MEL },
  36: { G: ORC, H: "113709", I: ORC },
  37: { G: ORC, H: "F34444" },
};
const WIDTHS = {
  "OEC QueueName Change": 154, "Assigned to Updated": 127, "CCR Updated": 80, "Look Assign To Exists": 129, "Lookup CCR Exists": 110,
  Status: 38, "Current Queue in lookup": 149, "Account in lookup": 108, "Assign Queue in OEC": 127, SR: 15, "Account No": 71,
  "Expected Result": 99, "Actual Result": 81, Message: 54, Fail: 21, New: 28, "Not New": 54, "N (*Y)": 36, "In Progress": 68,
  "Pass (AssignTo)": 94, "Pass (OnlyQueue)": 110, "Pass (CCRAssignTo)": 118, "Pass(AssignTo)": 91, "Pass(OnlyQueue)": 107, Pass: 27,
  [ORC]: 138, [MEL]: 109, [FTU]: 140, CurrentQueue: 89, "Assign To": 58, AssignQueue: 77, CCR: 24, "*cannot d": 60, "*can't test": 62,
  "Throw - strErrorMessag": 141, "Reason: OEC SR Assign": 138, "Reason: SR Status is alr": 140, "Throw: No matching Ac": 142, sts: 17,
};
const FLAGS = { 8: "N", 9: "N", 10: "N", 11: "N", 12: "N", 30: "H", 31: "H", 33: "H", 34: "H", 35: "H", 36: "H" };

const Sheet = styled.div`flex: none; display: flex; height: 78.4rem; font-family: ${SHEET};`;
const SheetGrid = styled.div`width: 189.8rem; overflow: hidden;`;
const ColHeads = styled.div`display: flex; height: 2rem; background: #262626; color: #c9c9c9; border-bottom: 1px solid #8a8a8a;`;
const ColHead = styled.div`
  display: flex; align-items: center; justify-content: center; flex: none; width: ${(p) => r(p.$w)};
  font-size: 1.4rem; border-right: 1px solid #555;
`;
const SheetRow = styled.div`display: flex; height: 2rem;`;
const RowHead = styled.div`
  flex: none; display: flex; align-items: center; justify-content: center; width: 2.5rem; height: 2rem;
  font-size: 1.4rem; letter-spacing: -.03em; background: #262626; color: #c9c9c9; border-bottom: 1px solid #4a4a4a;
`;
const Cell = styled.div`
  position: relative;
  flex: none;
  display: flex;
  align-items: center;
  width: ${(p) => r(p.$w)};
  height: 2rem;
  padding: .1rem 0 0 .25rem;
  color: #0a0a0a;
  overflow: ${(p) => (p.$spill ? "visible" : "hidden")};
  z-index: ${(p) => (p.$spill ? 1 : 0)};
  border-right: 1px solid ${(p) => (p.$dark ? "#595959" : p.$spill ? "transparent" : "#d4d4d4")};
  border-bottom: 1px solid ${(p) => (p.$dark ? "#595959" : "#d4d4d4")};
  background: ${(p) => (p.$dark ? "#595959" : "#fff")};
`;
const Flag = styled.i`
  position: absolute; left: 0; top: 0; border: .35rem solid transparent; border-top-color: #0f8a1f; border-left-color: #0f8a1f;
`;
const Filter = styled.div`
  position: absolute; right: 0; bottom: .1rem; width: 1.7rem; height: 1.7rem; display: flex; align-items: center; justify-content: center;
  background: linear-gradient(#fdfdfe, #e6eaf0); border: 1px solid #a3abb8;
`;
const White = styled.div`background: #fff;`;
const VScroll = styled.div`
  width: 2.2rem; display: flex; flex-direction: column; align-items: center; padding: .3rem 0 .1rem; background: #262626;
`;
const ScrollBtn = styled.div`
  display: flex; align-items: center; justify-content: center; width: 1.4rem; height: 1.4rem; background: #3a3a3a; color: #aaa;
`;
const VTrack = styled.div`flex: 1; width: 1.4rem; margin-top: .1rem; background: #333; &::before { content: ""; display: block; height: 73rem; background: #4f4f4f; }`;
const SheetTabs = styled(Line)`border-top: .2rem solid #b0b0b0; background: #262626; align-items: start;`;
const SheetTab = styled.div`
  display: flex; align-items: center; justify-content: center; width: 6.6rem; height: 2.4rem; background: #fff; border-bottom: .25rem solid #217346;
`;
const TabItem = styled.div`display: flex; align-items: center; height: 2.4rem;`;
const HTrack = styled.div`
  display: flex; align-items: center; height: 1.4rem; width: 72.9rem; margin-top: .5rem; background: #333;
`;
const HThumb = styled.i`height: 1.3rem; width: 58.2rem; margin: 0 auto 0 7.9rem; background: #505050;`;
const Status = styled(Line)`background: #31302e; border-top: 1px solid #3e3d3b; color: #e8e6e4;`;
const ViewOn = styled.div`display: flex; align-items: center; justify-content: center; width: 4rem; height: 2.1rem; background: #5a5856;`;
const FormulaLine = styled(Line)`background: linear-gradient(#1f1f1f, #262626 30%);`;
const DarkBox = styled(Line)`width: ${(p) => r(p.$w)}; background: #383838; border: 1px solid #484848;`;

function GridRow({ n }) {
  const data = CELLS[n] || {};
  const dark = SHADE[n] || "";
  return (
    <SheetRow>
      <RowHead>{n <= 38 ? n : ""}</RowHead>
      {COLS.map(([c, w]) => {
        const t = data[c];
        const spill = (c === "Q" && t && n > 5) || (c === "I" && t === ORC && !data.J);
        const failed = c === "P" && t === "Fail";
        const width = WIDTHS[t] || (c === "M" && t ? 85 : /^[A-Z]?\d+$/.test(t || "") ? 42.5 : undefined);
        return (
          <Cell key={c} $w={w} $dark={dark.includes(c)} $spill={spill}>
            {t && <T w={width} s={13.8} b={n === 5 || failed ? 700 : 400} c={failed && n !== 16 ? "#00b050" : "#0a0a0a"}>{t}</T>}
            {FLAGS[n] === c && <Flag />}
            {n === 5 && t && c !== "R" && (
              <Filter>
                {c === "M"
                  ? <Ico $w={11} stroke="#666" viewBox="0 0 11 11"><path d="M8.500 10V1M7 3l1.500-2L10 3" /><path fill="#666" stroke="none" d="M0 6h6l-3 4z" /></Ico>
                  : <Tri s={8} c="#666" />}
              </Filter>
            )}
          </Cell>
        );
      })}
    </SheetRow>
  );
}

const XIconBtn = ({ w, ml, art, a, aw, b, bw }) => (
  <XBig $w={w} $ml={ml}>
    <XArt>{art}</XArt>
    <XText><T s={11.4} w={aw}>{a}</T></XText>
    <XText>{b && <T s={11.4} w={bw}>{b}</T>}<Caret s={6} /></XText>
  </XBig>
);

function Excel() {
  const S = 11.4;
  return (
    <ExcelScreen>
      <TitleLine $h={34} $x={[21, 78, 129, 166, 179, 204, 218, 233, 254, 275, 476, 594, 784, 1616, 1700, 1751, 1800, 1845, 1892]}>
        <T s={S} w={50}>AutoSave</T>
        <Toggle><T s={10} w={13}>On</T><Knob /></Toggle>
        <Ico $w={16} viewBox="0 0 16 16"><path d="M7 15H3l-2-2V1h14v5M4 1v4h7V1M4 14V9h3M9 9.500a4 4 0 0 1 6 1M15 8v3h-3M15 13a4 4 0 0 1-6 0M9 15v-3h3" /></Ico>
        <Ico $w={14} $h={16} viewBox="0 0 14 16"><path d="M1 1v5h5M1 6c4-6 12-5 12 1 0 3-3 6-6 8" /></Ico>
        <Caret s={7} />
        <Ico $w={14} $h={16} viewBox="0 0 14 16"><path d="M13 1v5H8M13 6C9 0 1 1 1 7c0 3 3 6 6 8" /></Ico>
        <Caret s={7} />
        <Ico $w={12} $h={16} viewBox="0 0 12 16"><path d="M4 9V3c0-2 3-2 3 0v5l4 1v3l-1 3H5L1 9l1-1 2 2M2 5a3.500 3.500 0 1 1 7 0" /></Ico>
        <Caret s={7} />
        <Ico $w={9} viewBox="0 0 9 9"><path d="M1 1h7M1.500 4 4.500 7l3-3" /></Ico>
        <T s={S} w={113}>{"TestPlan.xlsx  -  Saved"}</T>
        <Tri s={6} c="#c8c6c4" />
        <SearchField $h={24} $x={[19, 49]}>
          <Ico $w={15} viewBox="0 0 15 15"><circle cx="9" cy="6" r="5" /><path d="M5.500 9.500 1 14" /></Ico><T s={S} w={35}>Search</T>
        </SearchField>
        <T s={S} w={73}>Karis J Courey</T>
        <Avatar $s={24} $bg="#69797e"><T s={10} w={11}>KJ</T></Avatar>
        <Ico $w={14} $h={11}><path d="M.5.5h13v10H.5zM.500 3h13M7 9V4M5 6l2-2 2 2" /></Ico>
        <Ico $w={10}><path d="M0 5h10" /></Ico>
        <Ico $w={11}><path d="M.5 3h7v7.500h-7zM3 3V.5h7.500v8H7.500" /></Ico>
        <Ico $w={11}><path d="m0 0 11 11M11 0 0 11" /></Ico>
      </TitleLine>
      <TabLine $h={31} $x={[17, 68, 133, 193, 254, 355, 437, 493, 561, 616, 704, 762, 878, 1732, 1808]}>
        <T s={12} w={19}>File</T>
        <ActiveTab><T s={12} b={700} w={37}>Home</T></ActiveTab>
        <T s={12} w={32}>Insert</T><T s={12} w={31}>Draw</T><T s={12} w={71}>Page Layout</T><T s={12} w={53}>Formulas</T><T s={12} w={27}>Data</T>
        <T s={12} w={40}>Review</T><T s={12} w={27}>View</T><T s={12} w={60}>Developer</T><T s={12} w={27}>Help</T><T s={12} w={86}>Autodesk Vault</T><T s={12} w={26}>Aras</T>
        <ChipButton $h={24} $w={68} $x={[7, 23]}>
          <Ico $w={12} viewBox="0 0 12 12"><path d="M4 4H1v7.500h9V7M3 8c1-4 3-5 6-5M6.500.5 9.500 3l-3 2.500" /></Ico><T s={12} b={600} w={35}>Share</T>
        </ChipButton>
        <ChipButton $h={24} $w={100} $x={[7, 23]}>
          <Ico $w={12} viewBox="0 0 12 12"><path d="M.5.5h11v8H5L3 11V8.500H.5z" /></Ico><T s={12} b={600} w={66}>Comments</T>
        </ChipButton>
      </TabLine>
      <XRibbon>
        <XGroup $w={164}>
          <XBody>
            <XIconBtn w={57} a="Paste" aw={28} art={<Ico $w={28} $h={30} viewBox="0 0 28 30" strokeWidth="2"><path stroke="#e8a33d" strokeWidth="2.500" d="M14 28H2V4h4M16 4h5v6" /><path stroke="#ccc" strokeWidth="1.300" d="M6 6V3h3a2.500 2.500 0 0 1 5 0h3v3z" /><path stroke="#eee" strokeWidth="1.300" fill="#323130" d="M14 12h13v17H14z" /></Ico>} />
            <Rows $pt={3}>
              <Line $h={24} $x={[0, 15]}><Ico $w={10} $h={15} stroke="#ccc"><path d="m2 0 5 10M8 0 3 10" /><g stroke="#4aa3e0"><circle cx="2" cy="12.500" r="1.800" /><circle cx="8" cy="12.500" r="1.800" /></g></Ico><T s={S} w={19}>Cut</T></Line>
              <Line $h={24} $x={[0, 15, 53]}><Ico $w={14} $h={15} viewBox="0 0 14 15" stroke="#ccc"><path d="M4 12H.5V.5H6M4.500 3h5.500L13.500 6v8.500h-9zM7 8h4M7 11h4" /></Ico><T s={S} w={28}>Copy</T><Caret s={6} /></Line>
              <Line $h={24} $x={[0, 15]}><Ico $w={14} $h={14} viewBox="0 0 14 14" stroke="#ccc"><path d="M13 1 9 4M5 2l6 6M3 5l5 5" strokeWidth="1.500" /><path fill="#e8b65a" stroke="none" d="M2 6l5 5-1 3-6-6z" /></Ico><T s={S} w={78}>Format Painter</T></Line>
            </Rows>
          </XBody>
          <XName $h={20} $x={[48, 153]}><T s={S} w={51}>Clipboard</T><Launcher /></XName>
        </XGroup>
        <XGroup $w={232}>
          <Rows $pt={9}>
            <Line $h={28} $x={[9, 134, 182, 208]}>
              <Field $w={122} $h={22} $x={[3, 113]}><T s={S} w={34}>Calibri</T><Caret s={6} /></Field>
              <Field $w={42} $h={22} $x={[3, 32]}><T s={S} w={12}>11</T><Caret s={6} /></Field>
              <T s={16} w={11}>A</T><T s={13} w={9}>A</T>
            </Line>
            <Line $h={32} $x={[16, 41, 63, 82, 98, 105, 128, 144, 152, 174, 193, 213]}>
              <T s={14} b={700} w={8}>B</T><T s={14} i w={6}>I</T>
              <Ico $w={10} $h={16}><path d="M1 1v6c0 5 8 5 8 0V1M0 14.500h10" /></Ico>
              <Caret s={6} /><Rule $c="#484644" $h={20} />
              <Ico $w={15} stroke="#ccc" strokeDasharray="1.500 1.500"><path d="M.5.5h14v14M.5.5v14M7.500.5v14M.5 7.500h14" /><path strokeDasharray="none" d="M0 14.500h15" /></Ico>
              <Caret s={6} /><Rule $c="#484644" $h={20} />
              <Ico $w={16} $h={16} stroke="#ccc" viewBox="0 0 16 16"><path d="m7 1 6 5-6 6-5-5z" /><path stroke="#4aa3e0" d="M13 5c3 1 2 5 2 5" /><path stroke="none" fill="#ff0" d="M0 12.500h16v3.500H0z" /></Ico>
              <Caret s={6} />
              <Ico $w={16} $h={16} stroke="#ccc" viewBox="0 0 16 16"><path d="M3.500 10.500 8 0l4.500 10.500M5 7h6" /><path stroke="none" fill="#f00" d="M0 12.500h16v3.500H0z" /></Ico>
              <Caret s={6} />
            </Line>
          </Rows>
          <XName $h={20} $x={[96, 221]}><T s={S} w={24}>Font</T><Launcher /></XName>
        </XGroup>
        <XGroup $w={280}>
          <Rows $pt={7}>
            <Line $h={32} $x={[11, 35, 57, 82, 91, 112, 138, 149, 165]}>
              <Lines k="top" /><Lines k="mid" /><Pressed><Lines k="bot" /></Pressed><Rule $c="#484644" $h={20} />
              <Ico $w={18} viewBox="0 0 18 18" stroke="#ccc"><circle cx="4" cy="7" r="2.500" /><circle cx="8" cy="3.500" r="2.500" /><path stroke="#4aa3e0" d="M5 16 17 5M13 5h4v4" /></Ico>
              <Caret s={6} /><Rule $c="#484644" $h={32} />
              <Ico $w={14} $h={18} viewBox="0 0 14 18" stroke="#ccc"><circle cx="3" cy="5" r="2.200" /><path d="M5.500 3v5M8 0v7M8 5a2 2 0 1 1 0 2M5 12a2.500 2.500 0 1 0 0 4" /><path stroke="#4aa3e0" d="M13 9v4H8M10 11l-2 2 2 2" /></Ico>
              <T s={S} w={52}>Wrap Text</T>
            </Line>
            <Line $h={32} $x={[11, 35, 59, 82, 91, 115, 138, 146, 165, 260]}>
              <Lines k="left" /><Lines k="center" /><Lines k="right" /><Rule $c="#484644" $h={20} />
              <Ico $w={16} $h={14} stroke="#ccc"><path d="M2 1h13M9 5h6M9 9h6M2 13h13" /><path stroke="#4aa3e0" strokeWidth="1.400" d="M7 7H1M3 5 1 7l2 2" /></Ico>
              <Ico $w={16} $h={14} stroke="#ccc"><path d="M2 1h13M9 5h6M9 9h6M2 13h13" /><path stroke="#4aa3e0" strokeWidth="1.400" d="M0 7h6M4 5l2 2-2 2" /></Ico>
              <Rule $c="#484644" $h={30} />
              <Ico $w={16} stroke="#ccc" viewBox="0 0 16 16"><path d="M.5.5h15v15H.5zM.5 4h15M.5 12h15" /><path stroke="#4aa3e0" d="M3 8h10M5 6 3 8l2 2M11 6l2 2-2 2" /></Ico>
              <T s={S} w={85}>{"Merge & Center"}</T><Caret s={6} />
            </Line>
          </Rows>
          <XName $h={20} $x={[106, 268]}><T s={S} w={53}>Alignment</T><Launcher /></XName>
        </XGroup>
        <XGroup $w={156}>
          <Rows $pt={8}>
            <Line $h={30} $x={[9]}><Field $w={140} $h={22} $x={[3, 130]}><T s={S} w={40}>General</T><Caret s={6} /></Field></Line>
            <Line $h={31} $x={[14, 34, 50, 80, 98, 106, 130]}>
              <T s={16} w={9}>$</T><Caret s={6} /><T s={16} w={16}>%</T><T s={19} b={700} w={7}>,</T><Rule $c="#484644" $h={20} />
              <Ico $w={16} $h={18} stroke="#ccc"><path stroke="#4aa3e0" strokeWidth="1.300" d="M8 4H1M4 1 1 4l3 3" /><ellipse cx="13" cy="4" rx="2" ry="3.500" /><ellipse cx="7" cy="14" rx="2" ry="3.500" /><ellipse cx="13" cy="14" rx="2" ry="3.500" /><path d="M3 17h1" /></Ico>
              <Ico $w={16} $h={18} stroke="#ccc"><path stroke="#4aa3e0" strokeWidth="1.300" d="M0 14h8M5 11l3 3-3 3" /><ellipse cx="7" cy="4" rx="2" ry="3.500" /><ellipse cx="13" cy="4" rx="2" ry="3.500" /><ellipse cx="13" cy="14" rx="2" ry="3.500" /><path d="M3 7h1" /></Ico>
            </Line>
          </Rows>
          <XName $h={20} $x={[50, 144]}><T s={S} w={41}>Number</T><Launcher /></XName>
        </XGroup>
        <XGroup $w={594}>
          <XBody>
            <XIconBtn w={92} a="Conditional" aw={62} b="Formatting" bw={59} art={<GridArt><path stroke="none" fill="#e03a2f" d="M8 1h7v7H8zM15 1h6v7h-6zM8 15h13v7H8z" /><path stroke="none" fill="#2c88d9" d="M8 8h9v7H8z" /></GridArt>} />
            <XIconBtn w={45} a="Format as" aw={53} b="Table" bw={28} art={<GridArt><path stroke="none" fill="#1267b4" d="M12 8h17v14H12z" /><path stroke="#8cc6f0" strokeWidth="2.500" d="M29 6 18 20M18 20l-5 5" /></GridArt>} />
            <Gallery>
              <Swatch $bg="#fff" $o="1px solid #8a8886"><T s={12} w={45} c="#000">Normal</T></Swatch>
              <Swatch $bg="#ffc7ce"><T s={12} w={22} c="#9c0006">Bad</T></Swatch>
              <Swatch $bg="#c6efce"><T s={12} w={32} c="#006100">Good</T></Swatch>
              <Swatch $bg="#ffeb9c"><T s={12} w={46} c="#9c5700">Neutral</T></Swatch>
              <Swatch $bg="#f2f2f2" $bd="1px solid #7f7f7f"><T s={12} b={600} w={69} c="#fa7d00">Calculation</T></Swatch>
              <Swatch $bg="#a5a5a5" $bd="2px double #3f3f3f"><T s={12} b={700} w={64} c="#fff">Check Cell</T></Swatch>
              <Swatch $bg="#fff"><T s={12} i w={88} c="#7f7f7f">Explanatory ...</T></Swatch>
              <Swatch $bg="#ffcc99" $bd="1px solid #7f7f7f"><T s={12} w={32} c="#3f3f76">Input</T></Swatch>
              <GalleryScroll><Ico $w={7} $h={4} stroke="#777"><path d="m0 4 3.500-3L7 4" /></Ico><Caret s={7} /><Ico $w={8} $h={7}><path d="M0 .5h8M1 3l3 3 3-3" /></Ico></GalleryScroll>
            </Gallery>
          </XBody>
          <XName $h={20} $x={[283]}><T s={S} w={29}>Styles</T></XName>
        </XGroup>
        <XGroup $w={143}>
          <XBody>
            <XIconBtn w={42} ml={9} a="Insert" aw={29} art={<GridArt><path stroke="none" fill="#1267b4" d="M8 8h22v7H8z" /><path stroke="#6cb8f0" strokeWidth="1.600" d="M14 11.500H0M5 7l-5 4.500L5 16" /></GridArt>} />
            <XIconBtn w={42} a="Delete" aw={33} art={<GridArt><path stroke="none" fill="#1267b4" d="M4 8h14v7H4z" /><path stroke="#e8503f" strokeWidth="2" d="m18 5 12 14M30 5 18 19" /></GridArt>} />
            <XIconBtn w={42} a="Format" aw={37} art={<GridArt><path stroke="none" fill="#1267b4" d="M8 8h14v7H8z" /><path stroke="#6cb8f0" d="M8-3h14M8-5v4M22-5v4" /></GridArt>} />
          </XBody>
          <XName $h={20} $x={[60]}><T s={S} w={24}>Cells</T></XName>
        </XGroup>
        <XGroup $w={200}>
          <XBody>
            <Rows $pt={3}>
              <Line $h={23} $x={[12, 31, 91]}><Ico $w={12} $h={14} stroke="#ccc"><path d="M11 2V.5H1L7 7l-6 6.500h10V12" /></Ico><T s={S} w={50}>AutoSum</T><Caret s={6} /></Line>
              <Line $h={22} $x={[12, 31, 50]}><Ico $w={15} $h={14} stroke="#ccc"><path d="M.5.5h14v13H.5z" /><path stroke="#4aa3e0" strokeWidth="1.500" d="M7.500 3v7M5 8l2.500 2.500L10 8" /></Ico><T s={S} w={16}>Fill</T><Caret s={6} /></Line>
              <Line $h={24} $x={[12, 31, 61]}><Ico $w={15} $h={13} stroke="#ddd"><path d="M1 8 8 1l6 4-7 7z" /><path fill="#b04bd0" stroke="none" d="m1 8 3.500-3.500 6 4.500L7 12z" /></Ico><T s={S} w={27}>Clear</T><Caret s={6} /></Line>
            </Rows>
            <XIconBtn w={42} ml={6} a="Sort &amp;" aw={34} b="Filter" bw={26} art={<Ico $w={28} $h={26} viewBox="0 0 28 26" stroke="#ccc"><path stroke="#4aa3e0" strokeWidth="1.300" d="M0 10 4.500 0 9 10M1.500 7h6" /><path strokeWidth="1.300" d="M1 15h7L1 25h7M12 6h15l-6 8v8l-3-2v-6z" /></Ico>} />
            <XIconBtn w={46} a="Find &amp;" aw={36} b="Select" bw={31} art={<Ico $w={28} $h={28} viewBox="0 0 28 28" stroke="#ccc" strokeWidth="1.300"><circle cx="17" cy="10" r="9.500" /><path d="M10.500 17 1 27" /></Ico>} />
          </XBody>
          <XName $h={20} $x={[82]}><T s={S} w={37}>Editing</T></XName>
        </XGroup>
        <XGroup $w={62.5}>
          <XBody>
            <XBig $w={62}>
              <XArt><Ico $w={32} $h={32} viewBox="0 0 32 32" stroke="#ccc"><path d="M.5.5h31v31H.5zM.5 8h31M.5 16h31M.5 24h31M8 .5v31M24 .5v31" /><circle cx="15" cy="12" r="9.500" fill="#323130" strokeWidth="1.500" /><path stroke="none" fill="#ddd" d="M10 11h4v7h-4z" /><path stroke="none" fill="#2c88d9" d="M15 7h4v11h-4z" /><path strokeWidth="2.500" d="m22 19 8 9" /></Ico></XArt>
              <XText><T s={S} w={41}>Analyze</T></XText><XText><T s={S} w={24}>Data</T></XText>
            </XBig>
          </XBody>
          <XName $h={20} $x={[10]}><T s={S} w={41}>Analysis</T></XName>
        </XGroup>
        <CollapseCorner><Ico $w={9} $h={6}><path d="m0 6 4.500-5L9 6" /></Ico></CollapseCorner>
      </XRibbon>
      <FormulaLine $h={46} $x={[5, 361, 378, 491]}>
        <DarkBox $w={343} $h={26} $x={[6, 327]}><T s={12} w={17}>D8</T><Tri s={8} c="#fff" /></DarkBox>
        <Ico $w={3} $h={12} stroke="#ddd" strokeDasharray="2 2.500" strokeWidth="2"><path d="M1.500 0v12" /></Ico>
        <DarkBox $w={110} $h={26} $x={[13, 48, 84]}>
          <Ico $w={12} $h={11} stroke="#777" strokeWidth="1.500"><path d="m1 0 10 11M11 0 1 11" /></Ico>
          <Ico $w={14} $h={11} stroke="#777" strokeWidth="2"><path d="m0 6 5 4.500L13 0" /></Ico>
          <FxText>fx</FxText>
        </DarkBox>
        <DarkBox $w={1424} $h={26} $x={[12, 1410]}><T s={13} w={10}>N</T><Caret s={8} k={2} /></DarkBox>
      </FormulaLine>
      <Sheet>
        <SheetGrid>
          <ColHeads>
            <ColHead $w={25}><Ico $w={11} stroke="none"><path fill="#777" d="M11 0v11H0z" /></Ico></ColHead>
            {COLS.map(([c, w]) => <ColHead key={c} $w={w}>{c === "R" ? "" : c}</ColHead>)}
          </ColHeads>
          <White>{Array.from({ length: 39 }, (_, i) => <GridRow key={i} n={i + 1} />)}</White>
        </SheetGrid>
        <VScroll>
          <ScrollBtn><Ico $w={8} $h={6} stroke="none"><path fill="#aaa" d="M4 0l4 6H0z" /></Ico></ScrollBtn>
          <VTrack />
          <ScrollBtn><Tri s={7} c="#aaa" /></ScrollBtn>
        </VScroll>
      </Sheet>
      <SheetTabs $h={27.5} $x={[27, 55, 100, 177, 229, 262, 1151, 1169]}>
        <TabItem><Ico $w={5} $h={8} stroke="none"><path fill="#777" d="M5 0v8L0 4z" /></Ico></TabItem>
        <TabItem><Ico $w={5} $h={8} stroke="none"><path fill="#777" d="M0 0v8l5-4z" /></Ico></TabItem>
        <SheetTab><T s={12} b={700} c="#217346" w={42}>Sheet1</T></SheetTab>
        <TabItem><T s={12} c="#e8e6e4" w={39}>Sheet2</T></TabItem>
        <Rule $c="#777" $h={20} $m=".3rem 0 0" />
        <TabItem><Ico $w={16} stroke="#ddd"><circle cx="8" cy="8" r="7.500" /><path strokeWidth="1.500" d="M8 4v8M4 8h8" /></Ico></TabItem>
        <TabItem><Ico $w={3} $h={12} stroke="#aaa" strokeDasharray="2 2.500" strokeWidth="2"><path d="M1.500 0v12" /></Ico></TabItem>
        <HTrack>
          <ScrollBtn><Ico $w={5} $h={8} stroke="none"><path fill="#aaa" d="M5 0v8L0 4z" /></Ico></ScrollBtn>
          <HThumb />
          <ScrollBtn><Ico $w={5} $h={8} stroke="none"><path fill="#aaa" d="M0 0v8l5-4z" /></Ico></ScrollBtn>
        </HTrack>
      </SheetTabs>
      <Status $h={21.5} $x={[7, 58, 1504, 1519, 1620, 1673, 1713, 1745, 1760, 1863, 1884]}>
        <T s={S} w={31}>Ready</T>
        <Ico $w={14} $h={13} viewBox="0 0 14 13"><path d="M.5.500h13M.5.500v10h4M3 3h8M3 5.500h3" /><circle cx="9.500" cy="8.500" r="3.500" /></Ico>
        <Ico $w={13} $h={13}><path d="M1 4V.5h11.500V8H9M0 6h5M3 9h4M5 12H1" /></Ico>
        <T s={S} w={83}>Display Settings</T>
        <ViewOn><Ico $w={14} $h={13} strokeWidth="1.300"><path d="M.5.5h13v12H.5zM.5 4.500h13M.5 8.500h13M5 .5v12M9.500.5v12" /></Ico></ViewOn>
        <Ico $w={14} $h={13}><path d="M.5.5h13v12H.5zM3.500 3h7v7h-7zM5 5h4M5 7.500h4" /></Ico>
        <Ico $w={14} $h={13}><path d="M.5 12.500V.5h13v7h-4v5h-9M5 .500v7M9.500.500v3" /></Ico>
        <Ico $w={9}><path d="M0 4.500h9" /></Ico>
        <Ico $w={98} $h={12} viewBox="0 0 98 12"><path d="M0 6h98" /><path strokeWidth="4" d="M50 0v12" /></Ico>
        <Ico $w={9}><path d="M0 4.500h9M4.500 0v9" /></Ico>
        <T s={11} w={28}>100%</T>
      </Status>
      <Bar $h={40} $bg="linear-gradient(90deg,#22363e 0%,#1f353f 45%,#1c2f42 72%,#1a2644 90%,#1b2440 100%)">
        <TaskApps />
        <Tray>
          <T s={12.500} w={122}>{"58°F  Mostly cloudy"}</T>
          <Ico $w={12} $h={7}><path d="m0 7 6-6 6 6" /></Ico>
          <Ico $w={16} stroke="none"><circle cx="10" cy="4" r="3" fill="#7b83eb" /><path fill="#5059c9" d="M5 7h10v7H5z" /><path fill="#4b53bc" d="M0 3h9v9H0z" /><path stroke="#fff" d="M2 5.500h5M4.500 5.500V10" /></Ico>
          <Ico $w={16} stroke="none"><circle cx="7" cy="8" r="7" fill="#4fa3a0" /><path fill="#8fd6cf" d="M3 4l5-3 3 5-4 4z" /></Ico>
          <Ico $w={16} strokeWidth="1.500"><path fill="#fff" d="M4 6h11v7H4z" /><path d="M3 1v4M1 3h4" /></Ico>
          <Ico $w={15}><path d="M4 1h10v9H4zM4 14h9M9 10v4M.5 3v11h3" /></Ico>
          <Ico $w={15} $h={13}><path d="M1 4.500h2L7 1v11L3 8.500H1zM9.500 4.500l4 4M13.500 4.500l-4 4" /></Ico>
        </Tray>
        <Clock $gap={4} $ml={17} $mr={20} $align="center"><T w={49} s={S}>12:37 PM</T><T w={47} s={S}>3/4/2022</T></Clock>
        <Notice><Ico $w={16} stroke="none"><path fill="#fff" d="M0 0h16v12H9l-3 4v-4H0z" /><path stroke="#1a2644" d="M3 3.500h10M3 6h10M3 8.500h10" /></Ico><Badge><T s={9.500} w={6}>2</T></Badge></Notice>
        <Rule $c="#3c4a5e" $w={1.4} $h={40} $m="0 .4rem 0 0" />
      </Bar>
    </ExcelScreen>
  );
}

/* ---------- browser with orchestrator ---------- */
const Browser = styled(Screen)`background: #e8eff3; font-family: ${WEB};`;
const TabStrip = styled.div`flex: none; display: flex; height: 3.4rem; background: #376a74; color: #fff; padding-left: .8rem; font-family: ${UI};`;
const BrowserTab = styled(Line)`
  width: ${(p) => r(p.$w)};
  background: ${(p) => (p.$on ? "#00596c" : "transparent")};
  border-radius: .8rem .8rem 0 0;
`;
const Fade = styled.div`overflow: hidden; width: 17.6rem; mask-image: linear-gradient(90deg, #000 88%, transparent);`;
const WinButtons = styled(Line)`margin-left: auto; color: #b9cccf; align-items: start; padding-top: .9rem;`;
const ToolLine = styled(Line)`background: #00596c; font-family: ${UI};`;
const Omni = styled(Line)`width: 170.4rem; border-radius: 1.4rem; background: #0c4757;`;
const Url = styled.div`display: flex;`;
const Header = styled(Line)`background: #00762c; border-top: .15rem solid #cfe3e4; position: relative; z-index: 2; box-shadow: 0 .3rem 1rem rgba(0, 0, 0, .22);`;
const LogoWord = styled.div`display: flex; align-items: center; gap: .3rem; color: #e6f4ea; font: 600 2.5rem Lato, sans-serif;`;
const LogoBox = styled.div`display: flex; align-items: center; justify-content: center; width: 3.4rem; height: 3.4rem; border: .25rem solid #e6f4ea;`;
const FolderSelect = styled(Line)`width: 23.9rem; background: #fcfefd; border-radius: .3rem; color: #0067df; box-shadow: 0 .2rem .8rem rgba(0, 0, 0, .3);`;
const Main = styled.div`flex: 1; display: flex; min-height: 0;`;
const Side = styled.aside`width: 27.6rem; background: #fcfdfd; border-right: 1px solid #cdd5d8; color: #526069; padding-top: .8rem;`;
const TreeRow = styled(Line)`background: ${(p) => (p.$on ? "#dcdddd" : "none")}; width: 27.2rem; color: ${(p) => (p.$dim ? "#868f96" : "#444d54")};`;
const SideRule = styled.div`height: 1px; width: 27.2rem; background: #cfd4d6;`;
const SideGap = styled.div`height: ${(p) => r(p.$h)};`;
const SideSearch = styled(Line)`width: 20.8rem; border-bottom: 1px solid #c3c9cc;`;
const Content = styled.div`flex: 1; min-width: 0; display: flex; flex-direction: column;`;
const NavTabs = styled.nav`flex: none; display: flex; height: 5.7rem; background: #fcfefe; border-bottom: 1px solid #d3dadd;`;
const NavTab = styled.div`
  display: flex; flex-direction: column; align-items: center; width: ${(p) => r(p.$w)}; padding-top: .7rem; gap: .3rem;
  color: ${(p) => (p.$off ? "#b9bdc0" : "#6b757c")};
  border-bottom: .25rem solid ${(p) => (p.$on ? "#0067df" : "transparent")};
`;
const PillRow = styled.div`display: flex; gap: 2rem; padding: 2rem 0 0 2rem;`;
const Pill = styled(Line)`
  width: ${(p) => r(p.$w)}; border-radius: 1.6rem;
  background: ${(p) => (p.$on ? "#444b50" : "#fcfefe")}; color: ${(p) => (p.$on ? "#fff" : "#5d676e")};
  border: 1px solid ${(p) => (p.$on ? "#444b50" : "#dadfe2")};
`;
const FilterSearch = styled(Line)`width: 14rem; border-bottom: 1px solid #b6bec3; color: #6b757c;`;
const Card = styled.div`
  position: relative; width: 160.3rem; margin: .5rem 0 0 2rem; background: #fcfefe; border-radius: .4rem;
  box-shadow: 0 .1rem .3rem rgba(40, 60, 70, .5); color: #444d54;
`;
const CardLine = styled(Line)`border-bottom: ${(p) => (p.$last ? "none" : "1px solid #d8dddf")};`;
const HeadCell = styled.div`display: flex; align-items: center; gap: .8rem;`;
const Fab = styled.div`
  position: absolute; right: 3.900rem; top: -2.1rem; width: 4rem; height: 4rem; border-radius: 50%;
  display: flex; align-items: center; justify-content: center; background: #0067df; box-shadow: 0 .3rem .9rem rgba(0, 0, 0, .35);
`;
const PageSize = styled(Line)`width: 5.6rem; border-bottom: 1px solid #b6bec3;`;

const Grip = () => (
  <Ico $w={9} $h={15} stroke="none" fill="#d3d8db">
    {[0, 1, 2].flatMap((y) => [0, 1].map((x) => <circle key={`${x}${y}`} cx={1.7 + x * 5.5} cy={1.7 + y * 5.7} r="1.300" />))}
  </Ico>
);
const Sorter = () => <Ico $w={8} $h={11} viewBox="0 0 8 11" strokeWidth="1.500"><path d="m.5 4 3.500-3 3.500 3M.5 7 4 10l3.500-3" /></Ico>;
const CloseX = () => <Ico $w={9} viewBox="0 0 9 9" strokeWidth="1.500"><path d="m.5.5 8 8M8.500.5l-8 8" /></Ico>;
const QueueIcon = ({ s, c }) => (
  <Ico $w={s} viewBox="0 0 18 18" $c={c}><path strokeWidth="2.200" d="M1.500 8v8.500h15V8" /><path strokeWidth="1.900" d="M5 1h8M5 4h8M5 7h8M5 10h8M5 13h8" /></Ico>
);
const UiMark = ({ s = 16 }) => (
  <Ico $w={s} viewBox="0 0 16 16" stroke="#1068e0" strokeWidth="1.300"><path d="M.7.7h14.600v14.600H.7zM4 4v5c0 3 4.500 3 4.500 0V4M11.800 7v4.800M11.800 4v1.200" /></Ico>
);

const URL_REST = ":447/queues/583/transactions?tid=2&fid=59&index=0&size=10&state=M4ewTgLgPgZgIgUwDYBMpzSuYEGMJwgB2UKCwuAetQCQAMUNAjFAExQDMUALALq9A%3D%3D%3D";
const FILTERS = [["Status: All", 59], ["Revision: All", 71], ["Priority: All", 64], ["Robot: All", 55], ["Reviewer: All", 74], ["Exception: All", 78]];
const TREE = [
  ["COR089", 47, 26, null, false], ["USPHC", 42, 26, 9, true], ["COR", 25, 48, 31, true], ["COR089", 47, 70, 53, false],
  ["COR089_BusinessSyste...", 148, 92, null, false, true], ["COR089_FinanceAdmini...", 149, 92], ["COR089_HumanResour...", 145, 92], ["COR089_SupplyChain", 126, 92],
];
const HEADS = [["STATUS", 44], ["REFERENCE", 65], ["REVISION", 53], ["PRIORITY", 52], ["DEADLINE", 56], ["POSTPONE", 62], ["STARTED", 51, 1], ["ENDED", 38, 1], ["ROBOT", 38], ["REVIEWER", 58], ["EXCEPTION", 63]];

function Orchestrator() {
  return (
    <Browser>
      <TabStrip>
        <BrowserTab $on $w={240} $h={34} $x={[12, 36, 219]}><UiMark /><Fade><T s={11.6} w={177}>Transactions - UiPath Orchestrator</T></Fade><CloseX /></BrowserTab>
        <BrowserTab $w={239} $h={34} $x={[11, 35, 219, 237]}>
          <Ico $w={17} $h={11} viewBox="0 0 17 11" stroke="none"><path fill="#0a5fc4" d="M4 3a5 5 0 0 1 9 2l-9 5z" /><path fill="#2a9df4" d="M0 8c0-4 4-4 5-3l7 1c5-1 6 5 2 5H3C1 11 0 10 0 8z" /></Ico>
          <T s={11.6} w={82}>RPA - OneDrive</T><CloseX /><Rule $c="#7b9da3" $h={20} />
        </BrowserTab>
        <BrowserTab $w={239} $h={34} $x={[11, 35, 219, 238]}>
          <Ico $w={16} stroke="#0f74d4" strokeWidth="2.500"><path d="M2 5 11 1.500l3.500 2v9l-4 2.500L6 13 2 11z" /></Ico>
          <T s={11.6} w={144}>OEC Stories Board - Boards</T><CloseX /><Rule $c="#7b9da3" $h={20} />
        </BrowserTab>
        <BrowserTab $w={239} $h={34} $x={[11, 35, 220, 238]}>
          <Ico $w={16} stroke="none"><path fill="#e21a12" d="M0 0h16v16H0z" /><rect x="3" y="4.500" width="10" height="7" rx="3.500" stroke="#fff" strokeWidth="2" /></Ico>
          <Fade><T s={11.6} w={184}>Service Requests - Oracle Applicati</T></Fade><CloseX /><Rule $c="#7b9da3" $h={20} />
        </BrowserTab>
        <Line $h={34} $x={[17]}><Ico $w={12} strokeWidth="2"><path d="M6 0v12M0 6h12" /></Ico></Line>
        <WinButtons $h={34} $x={[0, 46, 92, 138, 167]}>
          <Ico $w={10} $h={10}><path d="m0 2.500 5 5.500 5-5.500" /></Ico><Ico $w={10}><path d="M0 5.500h10" /></Ico>
          <Ico $w={10}><path d="M.5 2.500h7v7h-7zM2.500 2.500v-2h7v7h-2" /></Ico><Ico $w={10}><path d="m0 0 10 10M10 0 0 10" /></Ico><span />
        </WinButtons>
      </TabStrip>
      <ToolLine $h={36} $x={[13, 46, 78, 108, 1824, 1855, 1889]}>
        <Md icon={MdArrowBack} s={18} c="#5e7678" /><Md icon={MdArrowForward} s={18} c="#2a6a75" /><Md icon={MdRefresh} s={18} c="#8be0e6" />
        <Omni $h={28} $x={[11, 34, 1485, 1517]}>
          <Md icon={MdLock} s={14} c="#9ab1b6" />
          <Url><T s={12.2} c="#fff" w={168}>idc091xa696.uk.parker.corp</T><T s={12.2} c="#9bb3b9" w={1082}>{URL_REST}</T></Url>
          <Ico $w={15} $h={14} $c="#7d8f92" strokeWidth="1.200"><path d="M5 3H1v10.500h12V10M4 10c0-4 3-6 6-6V1l4.500 4.500L10 9.500V7C7 7 5 8 4 10z" /></Ico>
          <Md icon={MdStarBorder} s={17} c="#7d8f92" />
        </Omni>
        <Md icon={MdExtension} s={18} c="#8be0e6" />
        <Avatar $s={22} $bg="#0a57a8" $f={WEB}><T s={11.5} w={7}>K</T></Avatar>
        <Md icon={MdMoreVert} s={18} c="#6d8589" />
      </ToolLine>
      <Header $h={65} $x={[19, 232, 259, 328, 357, 392, 409, 1794, 1835, 1870]}>
        <LogoWord><LogoBox><T s={25} b={600} w={23}>Ui</T></LogoBox><T s={26} b={700} w={54}>Path</T></LogoWord>
        <Md icon={MdFolder} s={22} c="#055b22" /><T s={15} w={46} c="#055b22">USPHC</T>
        <Ico $w={8} $h={12} stroke="#d9efe0" strokeWidth="2.200"><path d="m1 1 5 5-5 5" /></Ico>
        <Ico $w={17} $h={4} stroke="none" fill="#d9efe0"><circle cx="2" cy="2" r="2" /><circle cx="8.500" cy="2" r="2" /><circle cx="15" cy="2" r="2" /></Ico>
        <Ico $w={8} $h={12} stroke="#d9efe0" strokeWidth="2.200"><path d="m1 1 5 5-5 5" /></Ico>
        <FolderSelect $h={36} $x={[15, 207]}><T s={14} w={172} b={500}>COR089_BusinessSystem...</T><Tri s={9} c="#0067df" /></FolderSelect>
        <Md icon={MdHelp} s={23} c="#e8f6ec" /><Md icon={MdNotifications} s={23} c="#e8f6ec" />
        <Avatar $s={35} $bg="#e03c12" $f={WEB}><T s={14} b={600} w={19}>KC</T></Avatar>
      </Header>
      <Main>
        <Side>
          <Line $h={39} $x={[26, 54]}><Md icon={MdPublic} s={21} c="#444d54" /><T s={14} w={41} b={500} c="#444d54">Tenant</T></Line>
          <Line $h={41} $x={[28, 54]}>
            <Ico $w={17} $h={15} strokeWidth="2" $c="#444d54"><path d="M0 1.500h13M0 5.500h13M0 9.500h8M8 11l3.500 3.500 5-5.500" /></Ico>
            <T s={14} w={44} b={500} c="#444d54">Actions</T>
          </Line>
          <SideGap $h={7} />
          <SideRule />
          <Line $h={32} $x={[10]}><T s={12.5} w={71} c="#6b757c">MY FOLDERS</T></Line>
          <Line $h={34} $x={[25, 54]}>
            <Ico $w={22} $h={18} viewBox="0 0 22 18" stroke="none"><path fill="#444d54" d="M1 1h7l2 2.500h11V17H1z" /><circle cx="11" cy="10" r="3.700" stroke="#fff" strokeWidth="1.300" /><circle cx="11" cy="10" r="1.300" fill="#fff" /></Ico>
            <SideSearch $h={31} $x={[0, 186]}><T s={14} i w={41} c="#68727a">Search</T><Md icon={MdSearch} s={18} c="#c9ced1" /></SideSearch>
          </Line>
          <SideGap $h={8} />
          {TREE.map(([t, w, x, cx, dim, on], i) => (
            <TreeRow key={i} $h={40} $dim={dim} $on={on} $x={[cx ?? x - 17, x - 1, x + 28]}>
              {cx ? <Caret s={10} k={1.1} c="#8a9298" /> : <span />}
              {on ? <Md icon={MdFolderShared} s={23} c="#0067df" /> : <Md icon={MdFolderOpen} s={23} />}
              <T s={14} w={w}>{t}</T>
            </TreeRow>
          ))}
        </Side>
        <Content>
          <NavTabs>
            <NavTab $w={100}><Md icon={MdHome} s={21} /><T s={14.5} w={38}>Home</T></NavTab>
            <NavTab $w={100}><Md icon={MdHub} s={21} /><T s={14.5} w={80}>Automations</T></NavTab>
            <NavTab $w={100}><Md icon={MdInsertChart} s={21} /><T s={14.5} w={67}>Monitoring</T></NavTab>
            <NavTab $w={100} $on><MdBox $s={21}><QueueIcon s={19} c="#0067df" /></MdBox><T s={14.5} w={47} c="#273139">Queues</T></NavTab>
            <NavTab $w={100}><Md icon={MdListAlt} s={21} /><T s={14.5} w={43}>Assets</T></NavTab>
            <NavTab $w={121}><Md icon={MdStorage} s={21} /><T s={14.5} w={101}>Storage Buckets</T></NavTab>
            <NavTab $w={120} $off>
              <MdBox $s={21}><Ico $w={20} viewBox="0 0 20 20"><path d="M3 3h4v14H3zM8 3h4v14H8zM13 3h4v14h-4zM3 13h14" /></Ico></MdBox>
              <T s={14.5} w={98}>Action Catalogs</T>
            </NavTab>
            <NavTab $w={100}><Md icon={MdSettings} s={21} /><T s={14.5} w={51}>Settings</T></NavTab>
          </NavTabs>
          <PillRow>
            <Pill $on $w={82} $h={32} $x={[8, 31]}><QueueIcon s={15} /><T s={13} b={700} w={41}>Queues</T></Pill>
            <Pill $w={133} $h={32} $x={[7, 31]}>
              <Ico $w={18} viewBox="0 0 18 18" $c="#444d54" strokeWidth="1.600"><circle cx="8" cy="8" r="6.500" /><path d="m12.500 12.500 4.500 4.500M5 11l1.500-4h4V5" /></Ico>
              <T s={13.5} w={91}>Review Requests</T>
            </Pill>
          </PillRow>
          <Line $h={63} $x={[36, 74]}><Md icon={MdArrowBack} s={22} c="#1a73e6" /><T s={14} b={700} w={219} c="#525c63">Transactions: ServiceRequestsQueue</T></Line>
          <Line $h={54} $x={[35, 71, 237, 306, 355, 436, 485, 559, 609, 674, 724, 808, 857, 945]}>
            <Ico $w={20} $h={14} stroke="none" fill="#444d54"><path d="M1 0h5v14H1zM7.500 0h5v14h-5zM14 0h5v14h-5z" /></Ico>
            <FilterSearch $h={34} $x={[0, 118]}><T s={16} w={49}>Search</T><Md icon={MdSearch} s={20} c="#444d54" /></FilterSearch>
            {FILTERS.flatMap(([label, w], i) => [
              <T key={label} s={13.5} b={i < 3 ? 600 : 500} w={w} c="#444d54">{label}</T>,
              <Caret key={label + "v"} s={12} k={1.4} c="#444d54" />,
            ])}
          </Line>
          <Card>
            <CardLine $h={56} $x={[16, 54, 156, 178, 281, 302, 404, 425, 528, 549, 651, 673, 775, 796, 898, 920, 1022, 1044, 1158, 1180, 1295, 1317, 1568]}>
              <Ico $w={17} stroke="#8b959b" strokeWidth="2"><rect x="1" y="1" width="15" height="15" rx="1.500" /></Ico>
              {HEADS.flatMap(([t, w, sort], i) => [
                <HeadCell key={t}><T s={12} b={500} w={w}>{t}</T>{sort && <Sorter />}</HeadCell>,
                i < 10 ? <Grip key={t + "g"} /> : null,
              ]).filter(Boolean)}
              <Md icon={MdRefresh} s={23} c="#444d54" />
            </CardLine>
            <CardLine $h={48} $x={[14, 47]}>
              <Ico $w={25} $h={15} strokeWidth="2.300"><path d="M0 1.500h3M6 1.500h19M0 7.500h3M6 7.500h19M0 13.500h3M6 13.500h19" /></Ico><T s={14.5} w={98} c="#5d676e">No data to show</T>
            </CardLine>
            <CardLine $last $h={56} $x={[1229, 1268, 1360, 1452, 1494, 1534, 1571]}>
              <T s={13} w={30} c="#5d676e">Items</T>
              <PageSize $h={28} $x={[0, 42]}><T s={13} w={14} c="#5d676e">10</T><Tri s={9} c="#444d54" /></PageSize>
              <T s={13} w={47} c="#5d676e">1 - 10 / 0</T>
              {["M1 0v14M13 1 7 7l6 6", "M10 1 4 7l6 6", "m4 1 6 6-6 6", "m1 1 6 6-6 6M13 0v14"].map((d) => (
                <Ico key={d} $w={14} stroke="#b3babe" strokeWidth="1.800"><path d={d} /></Ico>
              ))}
            </CardLine>
            <Fab><Ico $w={16} $h={18} stroke="none" fill="#fff"><path d="M5.500 0h5v6H15l-7 7-7-7h4.500zM0 15h16v2.200H0z" /></Ico></Fab>
          </Card>
        </Content>
      </Main>
      <Bar $h={40} $bg="linear-gradient(90deg,#22363e 0%,#1f353f 45%,#1c2f42 72%,#1a2644 90%,#1b2440 100%)">
        <TaskApps />
        <Clock $gap={4} $mr={8}><T w={49} s={11.4}>12:37 PM</T><T w={47} s={11.4}>3/4/2022</T></Clock>
      </Bar>
    </Browser>
  );
}

export default function App() {
  return (
    <>
      <Global />
      <Stage>
        <Explorer />
        <Excel />
        <Orchestrator />
      </Stage>
    </>
  );
}
